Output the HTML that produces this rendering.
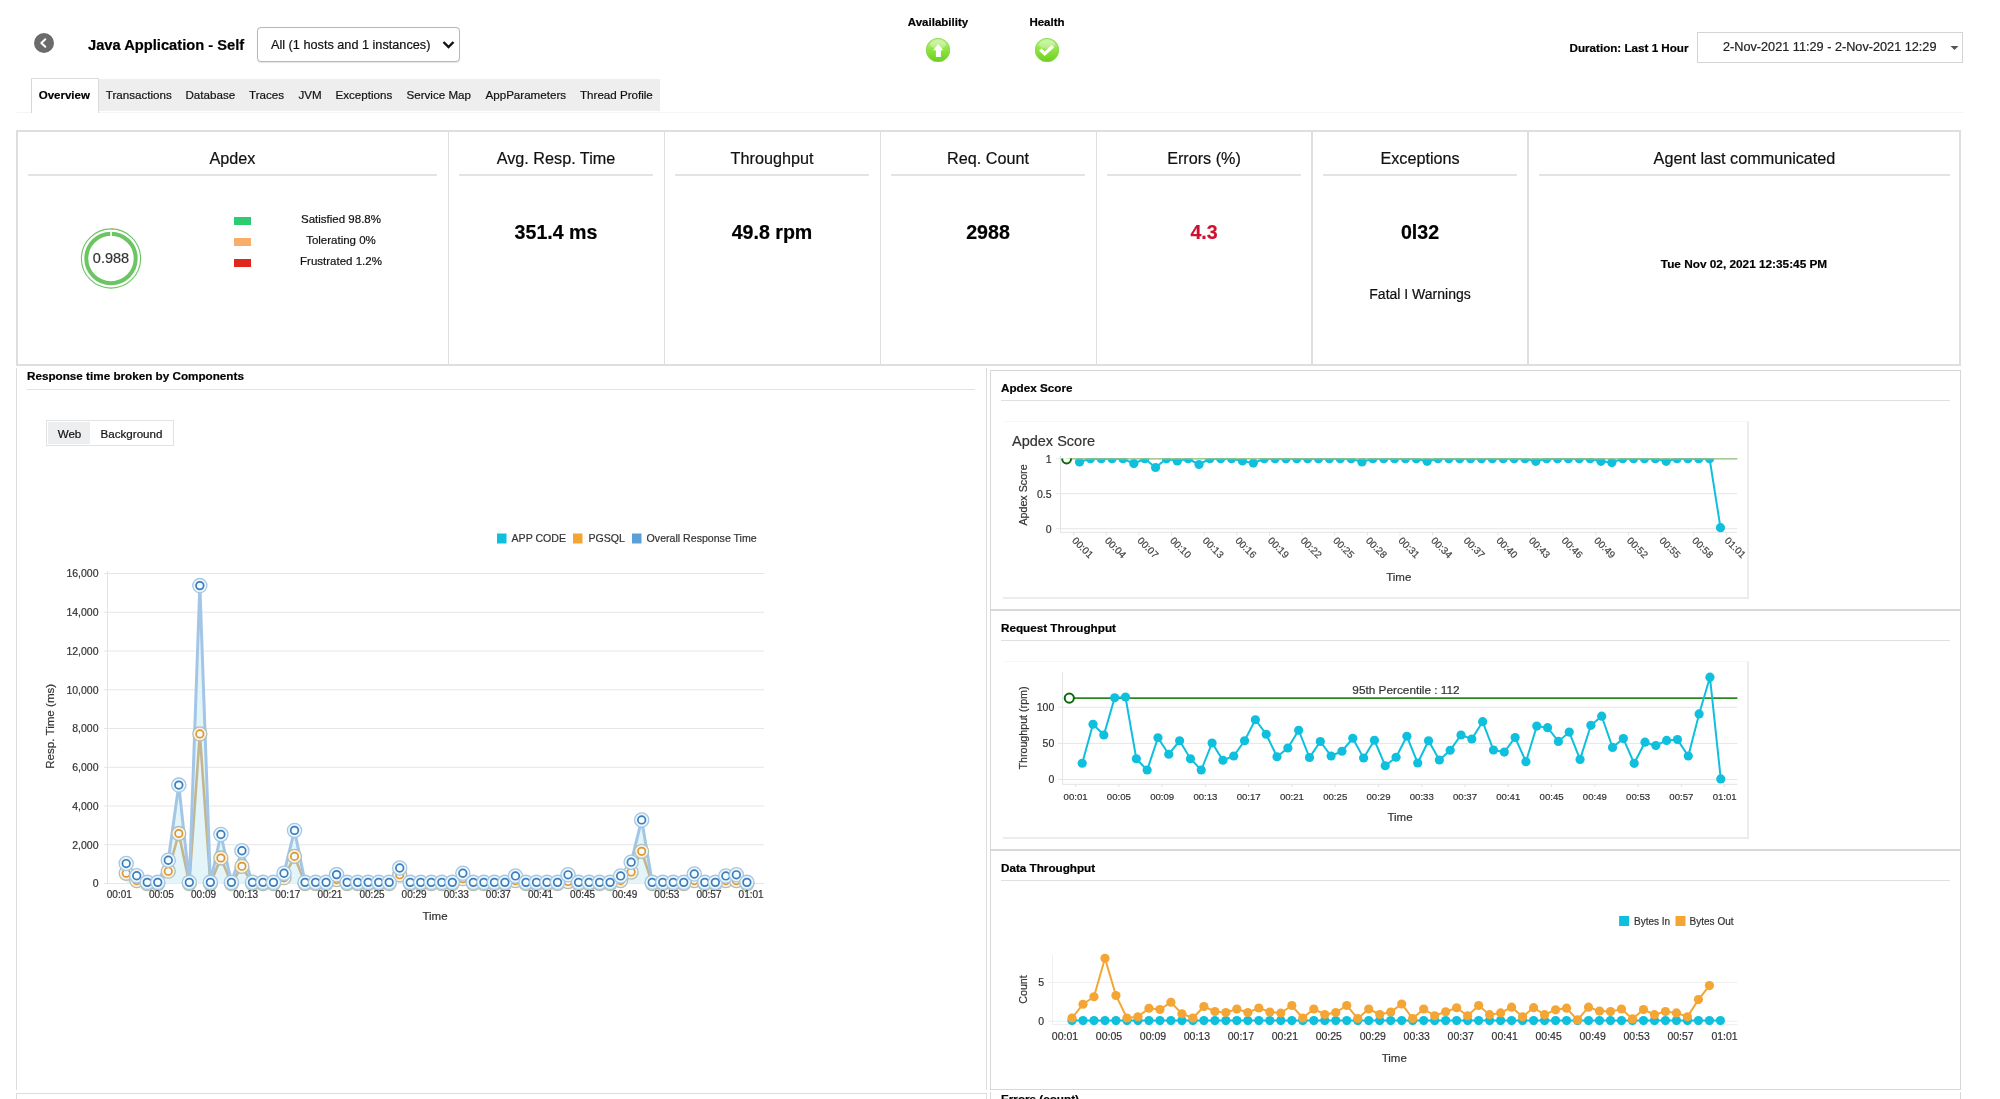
<!DOCTYPE html>
<html><head><meta charset="utf-8"><title>Java Application - Self</title>
<style>
html,body{margin:0;padding:0;background:#fff;}
body{width:2000px;height:1099px;overflow:hidden;position:relative;font-family:"Liberation Sans", sans-serif;}
#root{position:absolute;left:0;top:0;width:2000px;height:1099px;will-change:transform;background:#fff}
.t{position:absolute;white-space:nowrap;font-family:"Liberation Sans", sans-serif;-webkit-text-stroke:0.2px currentColor;}
svg text{font-family:"Liberation Sans", sans-serif;stroke-width:0.2px;}
</style></head><body><div id="root">
<div style="position:absolute;left:34px;top:33px;width:20px;height:20px;border-radius:50%;background:#6b6b6b"></div><svg style="position:absolute;left:34px;top:33px" width="20" height="20"><path d="M11.3 6.2 L7.3 10 L11.3 13.8" stroke="#fff" stroke-width="2" fill="none" stroke-linecap="round" stroke-linejoin="round"/></svg><div class="t" style="left:88px;top:37.56px;font-size:14.7px;line-height:14.7px;font-weight:bold;color:#000;">Java Application - Self</div><div style="position:absolute;left:257px;top:27px;width:203px;height:34.5px;border:1px solid #b8b8b8;border-radius:4px;background:#fff;box-sizing:border-box;box-shadow:0 0.5px 1px rgba(0,0,0,0.1)"></div><div class="t" style="left:271px;top:38.75px;font-size:12.7px;line-height:12.7px;color:#111;">All (1 hosts and 1 instances)</div><svg style="position:absolute;left:441px;top:39px" width="16" height="12"><path d="M2.5 3 L7.5 8 L12.5 3" stroke="#111" stroke-width="2.4" fill="none"/></svg><div class="t" style="left:438px;width:1000px;text-align:center;top:17.47px;font-size:11.5px;line-height:11.5px;font-weight:bold;color:#000;">Availability</div><div class="t" style="left:547px;width:1000px;text-align:center;top:17.47px;font-size:11.5px;line-height:11.5px;font-weight:bold;color:#000;">Health</div><svg style="position:absolute;left:925px;top:37px" width="26" height="26" viewBox="0 0 26 26">
<defs><linearGradient id="g938" x1="0" y1="0" x2="0" y2="1"><stop offset="0%" stop-color="#c9f59c"/><stop offset="45%" stop-color="#92e545"/><stop offset="100%" stop-color="#6bcf1a"/></linearGradient></defs>
<circle cx="13" cy="13" r="12" fill="url(#g938)"/>
<circle cx="13" cy="13" r="11.6" fill="none" stroke="#86d650" stroke-width="0.8"/>
<ellipse cx="13" cy="7.5" rx="8" ry="4.2" fill="#ffffff" opacity="0.3"/>
<path d="M13.3 6.9 L18.3 13.2 L15.9 13.2 L15.9 20 L10.9 20 L10.9 13.2 L8.1 13.2 Z" fill="#fff"/></svg><svg style="position:absolute;left:1034px;top:37px" width="26" height="26" viewBox="0 0 26 26">
<defs><linearGradient id="g1047" x1="0" y1="0" x2="0" y2="1"><stop offset="0%" stop-color="#c9f59c"/><stop offset="45%" stop-color="#92e545"/><stop offset="100%" stop-color="#6bcf1a"/></linearGradient></defs>
<circle cx="13" cy="13" r="12" fill="url(#g1047)"/>
<circle cx="13" cy="13" r="11.6" fill="none" stroke="#86d650" stroke-width="0.8"/>
<ellipse cx="13" cy="7.5" rx="8" ry="4.2" fill="#ffffff" opacity="0.3"/>
<path d="M6.3 12.6 L10.7 16.7 L18.9 9.2" stroke="#fff" stroke-width="3.4" fill="none" stroke-linecap="butt" stroke-linejoin="miter"/></svg><div class="t" style="left:688.5px;width:1000px;text-align:right;top:41.64px;font-size:11.65px;line-height:11.65px;font-weight:bold;color:#000;">Duration: Last 1 Hour</div><div style="position:absolute;left:1697px;top:32px;width:266px;height:31px;border:1px solid #d4d4d4;background:#fff;box-sizing:border-box"></div><div class="t" style="left:1723px;top:41.35px;font-size:12.7px;line-height:12.7px;color:#222;">2-Nov-2021 11:29 - 2-Nov-2021 12:29</div><svg style="position:absolute;left:1949.5px;top:45px" width="10" height="6"><path d="M0.5 1 L4.5 5 L8.5 1 Z" fill="#555"/></svg><div style="position:absolute;left:31px;top:79px;width:629px;height:32px;background:#eeeeee"></div><div style="position:absolute;left:16px;top:112px;width:1948px;height:1px;background:#f5f5f5"></div><div style="position:absolute;left:30.5px;top:78px;width:68px;height:35px;background:#fff;border:1px solid #dcdcdc;border-left:1.5px solid #d8d8d8;border-bottom:none;box-sizing:border-box"></div><div class="t" style="left:38.7px;top:89.97px;font-size:11.5px;line-height:11.5px;font-weight:bold;color:#000;">Overview</div><div class="t" style="left:105.8px;top:88.98px;font-size:11.6px;line-height:11.6px;color:#111;">Transactions</div><div class="t" style="left:185.5px;top:88.98px;font-size:11.6px;line-height:11.6px;color:#111;">Database</div><div class="t" style="left:249px;top:88.98px;font-size:11.6px;line-height:11.6px;color:#111;">Traces</div><div class="t" style="left:298.5px;top:88.98px;font-size:11.6px;line-height:11.6px;color:#111;">JVM</div><div class="t" style="left:335.5px;top:88.98px;font-size:11.6px;line-height:11.6px;color:#111;">Exceptions</div><div class="t" style="left:406.5px;top:88.98px;font-size:11.6px;line-height:11.6px;color:#111;">Service Map</div><div class="t" style="left:485.5px;top:88.98px;font-size:11.6px;line-height:11.6px;color:#111;">AppParameters</div><div class="t" style="left:580px;top:88.98px;font-size:11.6px;line-height:11.6px;color:#111;">Thread Profile</div><div style="position:absolute;left:16px;top:130px;width:1945px;height:236px;border:2px solid #dedede;box-sizing:border-box;background:#fff"></div><div style="position:absolute;left:448px;top:131px;width:1px;height:234px;background:#dedede"></div><div style="position:absolute;left:664px;top:131px;width:1px;height:234px;background:#dedede"></div><div style="position:absolute;left:880px;top:131px;width:1px;height:234px;background:#dedede"></div><div style="position:absolute;left:1096px;top:131px;width:1px;height:234px;background:#dedede"></div><div style="position:absolute;left:1311px;top:131px;width:2px;height:234px;background:#dedede"></div><div style="position:absolute;left:1527px;top:131px;width:2px;height:234px;background:#dedede"></div><div style="position:absolute;left:28px;top:174px;width:409px;height:2px;background:#e3e3e3"></div><div class="t" style="left:-267.5px;width:1000px;text-align:center;top:149.99px;font-size:16.2px;line-height:16.2px;color:#111;">Apdex</div><div style="position:absolute;left:459px;top:174px;width:194px;height:2px;background:#e3e3e3"></div><div class="t" style="left:56.0px;width:1000px;text-align:center;top:149.99px;font-size:16.2px;line-height:16.2px;color:#111;">Avg. Resp. Time</div><div style="position:absolute;left:675px;top:174px;width:194px;height:2px;background:#e3e3e3"></div><div class="t" style="left:272.0px;width:1000px;text-align:center;top:149.99px;font-size:16.2px;line-height:16.2px;color:#111;">Throughput</div><div style="position:absolute;left:891px;top:174px;width:194px;height:2px;background:#e3e3e3"></div><div class="t" style="left:488.0px;width:1000px;text-align:center;top:149.99px;font-size:16.2px;line-height:16.2px;color:#111;">Req. Count</div><div style="position:absolute;left:1107px;top:174px;width:194px;height:2px;background:#e3e3e3"></div><div class="t" style="left:704.0px;width:1000px;text-align:center;top:149.99px;font-size:16.2px;line-height:16.2px;color:#111;">Errors (%)</div><div style="position:absolute;left:1323px;top:174px;width:194px;height:2px;background:#e3e3e3"></div><div class="t" style="left:920.0px;width:1000px;text-align:center;top:149.99px;font-size:16.2px;line-height:16.2px;color:#111;">Exceptions</div><div style="position:absolute;left:1539px;top:174px;width:411px;height:2px;background:#e3e3e3"></div><div class="t" style="left:1244.5px;width:1000px;text-align:center;top:149.99px;font-size:16.2px;line-height:16.2px;color:#111;">Agent last communicated</div><div class="t" style="left:56px;width:1000px;text-align:center;top:223.21px;font-size:19.6px;line-height:19.6px;font-weight:bold;color:#000;">351.4 ms</div><div class="t" style="left:272px;width:1000px;text-align:center;top:223.21px;font-size:19.6px;line-height:19.6px;font-weight:bold;color:#000;">49.8 rpm</div><div class="t" style="left:488px;width:1000px;text-align:center;top:223.21px;font-size:19.6px;line-height:19.6px;font-weight:bold;color:#000;">2988</div><div class="t" style="left:704px;width:1000px;text-align:center;top:223.21px;font-size:19.6px;line-height:19.6px;font-weight:bold;color:#d0102e;">4.3</div><div class="t" style="left:920px;width:1000px;text-align:center;top:223.21px;font-size:19.6px;line-height:19.6px;font-weight:bold;color:#000;">0l32</div><div class="t" style="left:920px;width:1000px;text-align:center;top:287.15px;font-size:14px;line-height:14px;color:#111;">Fatal I Warnings</div><div class="t" style="left:1244px;width:1000px;text-align:center;top:258.51px;font-size:11.8px;line-height:11.8px;font-weight:bold;color:#000;">Tue Nov 02, 2021 12:35:45 PM</div><svg style="position:absolute;left:78px;top:226px" width="66" height="66" viewBox="0 0 66 66">
<circle cx="33" cy="32.5" r="29.6" fill="none" stroke="#6cc563" stroke-width="1.1"/><path d="M33 2.9 A29.6 29.6 0 0 1 35.2 3" stroke="#e8a040" stroke-width="1.2" fill="none"/>
<circle cx="33" cy="32.5" r="24.7" fill="none" stroke="#6cc563" stroke-width="4"/>
<rect x="32.3" y="5" width="1.6" height="6" fill="#fff"/>
</svg><div class="t" style="left:-389px;width:1000px;text-align:center;top:250.93px;font-size:14.5px;line-height:14.5px;color:#333;">0.988</div><div style="position:absolute;left:234px;top:217px;width:17px;height:7.5px;background:#2ecc71"></div><div class="t" style="left:-159px;width:1000px;text-align:center;top:213.57px;font-size:11.5px;line-height:11.5px;color:#111;">Satisfied 98.8%</div><div style="position:absolute;left:234px;top:238px;width:17px;height:7.5px;background:#f7ae6a"></div><div class="t" style="left:-159px;width:1000px;text-align:center;top:234.57px;font-size:11.5px;line-height:11.5px;color:#111;">Tolerating 0%</div><div style="position:absolute;left:234px;top:259px;width:17px;height:7.5px;background:#e1261c"></div><div class="t" style="left:-159px;width:1000px;text-align:center;top:255.57px;font-size:11.5px;line-height:11.5px;color:#111;">Frustrated 1.2%</div><div style="position:absolute;left:16px;top:368px;width:971px;height:722px;border-left:1px solid #dcdcdc;border-right:1px solid #dcdcdc;box-sizing:border-box"></div><div class="t" style="left:27px;top:370.10px;font-size:11.7px;line-height:11.7px;font-weight:bold;color:#000;">Response time broken by Components</div><div style="position:absolute;left:27px;top:389px;width:948px;height:1px;background:#e3e3e3"></div><div style="position:absolute;left:46px;top:420px;width:128px;height:26px;border:1px solid #e2e2e2;box-sizing:border-box"></div><div style="position:absolute;left:48px;top:422px;width:42px;height:22px;background:#eceeef"></div><div class="t" style="left:-430.5px;width:1000px;text-align:center;top:427.78px;font-size:11.6px;line-height:11.6px;color:#111;">Web</div><div class="t" style="left:-368.5px;width:1000px;text-align:center;top:427.78px;font-size:11.6px;line-height:11.6px;color:#111;">Background</div><div style="position:absolute;left:16px;top:1093px;width:971px;height:10px;border:1px solid #dcdcdc;box-sizing:border-box"></div><div style="position:absolute;left:990px;top:370px;width:971px;height:240px;border:1px solid #d8d8d8;box-sizing:border-box;background:#fff"></div><div class="t" style="left:1001px;top:382.10px;font-size:11.7px;line-height:11.7px;font-weight:bold;color:#000;">Apdex Score</div><div style="position:absolute;left:1001px;top:400px;width:949px;height:1px;background:#e0e0e0"></div><div style="position:absolute;left:1003px;top:421px;width:746px;height:178px;border-top:1px solid #f7f7f7;border-right:2px solid #ececec;border-bottom:2px solid #ececec;box-sizing:border-box"></div><div style="position:absolute;left:990px;top:610px;width:971px;height:240px;border:1px solid #d8d8d8;box-sizing:border-box;background:#fff"></div><div class="t" style="left:1001px;top:622.10px;font-size:11.7px;line-height:11.7px;font-weight:bold;color:#000;">Request Throughput</div><div style="position:absolute;left:1001px;top:640px;width:949px;height:1px;background:#e0e0e0"></div><div style="position:absolute;left:1003px;top:661px;width:746px;height:178px;border-top:1px solid #f7f7f7;border-right:2px solid #ececec;border-bottom:2px solid #ececec;box-sizing:border-box"></div><div style="position:absolute;left:990px;top:850px;width:971px;height:240px;border:1px solid #d8d8d8;box-sizing:border-box;background:#fff"></div><div class="t" style="left:1001px;top:862.10px;font-size:11.7px;line-height:11.7px;font-weight:bold;color:#000;">Data Throughput</div><div style="position:absolute;left:1001px;top:880px;width:949px;height:1px;background:#e0e0e0"></div><div style="position:absolute;left:990px;top:1092px;width:971px;height:20px;border:1px solid #d8d8d8;box-sizing:border-box;background:#fff;border-top:none"></div><div class="t" style="left:1001px;top:1093.30px;font-size:11.7px;line-height:11.7px;font-weight:bold;color:#000;">Errors (count)</div><svg style="position:absolute;left:0;top:0" width="1000" height="1099" viewBox="0 0 1000 1099"><line x1="104" y1="883.5" x2="764" y2="883.5" stroke="#e6e6e6" stroke-width="1"/><text x="98.5" y="887.3" font-size="10.5" fill="#333" stroke="#333" stroke-width="0.2" text-anchor="end" >0</text><line x1="104" y1="844.75" x2="764" y2="844.75" stroke="#e6e6e6" stroke-width="1"/><text x="98.5" y="848.55" font-size="10.5" fill="#333" stroke="#333" stroke-width="0.2" text-anchor="end" >2,000</text><line x1="104" y1="806.0" x2="764" y2="806.0" stroke="#e6e6e6" stroke-width="1"/><text x="98.5" y="809.8" font-size="10.5" fill="#333" stroke="#333" stroke-width="0.2" text-anchor="end" >4,000</text><line x1="104" y1="767.25" x2="764" y2="767.25" stroke="#e6e6e6" stroke-width="1"/><text x="98.5" y="771.05" font-size="10.5" fill="#333" stroke="#333" stroke-width="0.2" text-anchor="end" >6,000</text><line x1="104" y1="728.5" x2="764" y2="728.5" stroke="#e6e6e6" stroke-width="1"/><text x="98.5" y="732.3" font-size="10.5" fill="#333" stroke="#333" stroke-width="0.2" text-anchor="end" >8,000</text><line x1="104" y1="689.75" x2="764" y2="689.75" stroke="#e6e6e6" stroke-width="1"/><text x="98.5" y="693.55" font-size="10.5" fill="#333" stroke="#333" stroke-width="0.2" text-anchor="end" >10,000</text><line x1="104" y1="651.0" x2="764" y2="651.0" stroke="#e6e6e6" stroke-width="1"/><text x="98.5" y="654.8" font-size="10.5" fill="#333" stroke="#333" stroke-width="0.2" text-anchor="end" >12,000</text><line x1="104" y1="612.25" x2="764" y2="612.25" stroke="#e6e6e6" stroke-width="1"/><text x="98.5" y="616.05" font-size="10.5" fill="#333" stroke="#333" stroke-width="0.2" text-anchor="end" >14,000</text><line x1="104" y1="573.5" x2="764" y2="573.5" stroke="#e6e6e6" stroke-width="1"/><text x="98.5" y="577.3" font-size="10.5" fill="#333" stroke="#333" stroke-width="0.2" text-anchor="end" >16,000</text><line x1="107.5" y1="571" x2="107.5" y2="884" stroke="#e3e3e3" stroke-width="1"/><path d="M126.20,863.54 L136.72,875.75 L147.24,882.34 L157.76,882.34 L168.28,860.25 L178.80,785.08 L189.32,882.34 L199.84,585.61 L210.36,882.34 L220.88,834.48 L231.40,882.34 L241.92,850.76 L252.44,882.34 L262.96,882.34 L273.48,882.34 L284.00,873.23 L294.52,830.41 L305.04,882.34 L315.56,882.34 L326.08,882.34 L336.60,874.59 L347.12,882.34 L357.64,882.34 L368.16,882.34 L378.68,882.34 L389.20,882.34 L399.72,868.00 L410.24,882.34 L420.76,882.34 L431.28,882.34 L441.80,882.34 L452.32,882.34 L462.84,873.23 L473.36,882.34 L483.88,882.34 L494.40,882.34 L504.92,882.34 L515.44,875.94 L525.96,882.34 L536.48,882.34 L547.00,882.34 L557.52,882.34 L568.04,874.78 L578.56,882.34 L589.08,882.34 L599.60,882.34 L610.12,882.34 L620.64,875.94 L631.16,862.19 L641.68,819.95 L652.20,882.34 L662.72,882.34 L673.24,882.34 L683.76,882.34 L694.28,874.01 L704.80,882.34 L715.32,882.34 L725.84,875.94 L736.36,874.78 L746.88,882.34 L746.88,883.5 L126.20,883.5 Z" fill="#e4f5fa"/><path d="M126.20,873.23 L136.72,880.59 L147.24,883.50 L157.76,883.50 L168.28,871.20 L178.80,833.51 L189.32,883.50 L199.84,733.92 L210.36,883.50 L220.88,858.00 L231.40,883.50 L241.92,866.29 L252.44,883.50 L262.96,883.50 L273.48,883.50 L284.00,877.69 L294.52,856.38 L305.04,883.50 L315.56,883.50 L326.08,883.50 L336.60,879.62 L347.12,883.50 L357.64,883.50 L368.16,883.50 L378.68,883.50 L389.20,883.50 L399.72,874.78 L410.24,883.50 L420.76,883.50 L431.28,883.50 L441.80,883.50 L452.32,883.50 L462.84,878.66 L473.36,883.50 L483.88,883.50 L494.40,883.50 L504.92,883.50 L515.44,880.59 L525.96,883.50 L536.48,883.50 L547.00,883.50 L557.52,883.50 L568.04,881.56 L578.56,883.50 L589.08,883.50 L599.60,883.50 L610.12,883.50 L620.64,880.59 L631.16,872.07 L641.68,851.34 L652.20,883.50 L662.72,883.50 L673.24,883.50 L683.76,883.50 L694.28,880.59 L704.80,883.50 L715.32,883.50 L725.84,880.59 L736.36,880.59 L746.88,883.50" fill="none" stroke="#c3b58e" stroke-width="2.6" stroke-linejoin="round"/><path d="M126.20,863.54 L136.72,875.75 L147.24,882.34 L157.76,882.34 L168.28,860.25 L178.80,785.08 L189.32,882.34 L199.84,585.61 L210.36,882.34 L220.88,834.48 L231.40,882.34 L241.92,850.76 L252.44,882.34 L262.96,882.34 L273.48,882.34 L284.00,873.23 L294.52,830.41 L305.04,882.34 L315.56,882.34 L326.08,882.34 L336.60,874.59 L347.12,882.34 L357.64,882.34 L368.16,882.34 L378.68,882.34 L389.20,882.34 L399.72,868.00 L410.24,882.34 L420.76,882.34 L431.28,882.34 L441.80,882.34 L452.32,882.34 L462.84,873.23 L473.36,882.34 L483.88,882.34 L494.40,882.34 L504.92,882.34 L515.44,875.94 L525.96,882.34 L536.48,882.34 L547.00,882.34 L557.52,882.34 L568.04,874.78 L578.56,882.34 L589.08,882.34 L599.60,882.34 L610.12,882.34 L620.64,875.94 L631.16,862.19 L641.68,819.95 L652.20,882.34 L662.72,882.34 L673.24,882.34 L683.76,882.34 L694.28,874.01 L704.80,882.34 L715.32,882.34 L725.84,875.94 L736.36,874.78 L746.88,882.34" fill="none" stroke="#a3c6e6" stroke-width="3" stroke-linejoin="round"/><circle cx="126.20" cy="873.23" r="7" fill="#f4f4ea" stroke="#b3bdb2" stroke-width="1.3"/><circle cx="126.20" cy="873.23" r="3.7" fill="#f2fbfd" stroke="#e3952e" stroke-width="1.7"/><circle cx="136.72" cy="880.59" r="7" fill="#f4f4ea" stroke="#b3bdb2" stroke-width="1.3"/><circle cx="136.72" cy="880.59" r="3.7" fill="#f2fbfd" stroke="#e3952e" stroke-width="1.7"/><circle cx="147.24" cy="883.50" r="7" fill="#f4f4ea" stroke="#b3bdb2" stroke-width="1.3"/><circle cx="147.24" cy="883.50" r="3.7" fill="#f2fbfd" stroke="#e3952e" stroke-width="1.7"/><circle cx="157.76" cy="883.50" r="7" fill="#f4f4ea" stroke="#b3bdb2" stroke-width="1.3"/><circle cx="157.76" cy="883.50" r="3.7" fill="#f2fbfd" stroke="#e3952e" stroke-width="1.7"/><circle cx="168.28" cy="871.20" r="7" fill="#f4f4ea" stroke="#b3bdb2" stroke-width="1.3"/><circle cx="168.28" cy="871.20" r="3.7" fill="#f2fbfd" stroke="#e3952e" stroke-width="1.7"/><circle cx="178.80" cy="833.51" r="7" fill="#f4f4ea" stroke="#b3bdb2" stroke-width="1.3"/><circle cx="178.80" cy="833.51" r="3.7" fill="#f2fbfd" stroke="#e3952e" stroke-width="1.7"/><circle cx="189.32" cy="883.50" r="7" fill="#f4f4ea" stroke="#b3bdb2" stroke-width="1.3"/><circle cx="189.32" cy="883.50" r="3.7" fill="#f2fbfd" stroke="#e3952e" stroke-width="1.7"/><circle cx="199.84" cy="733.92" r="7" fill="#f4f4ea" stroke="#b3bdb2" stroke-width="1.3"/><circle cx="199.84" cy="733.92" r="3.7" fill="#f2fbfd" stroke="#e3952e" stroke-width="1.7"/><circle cx="210.36" cy="883.50" r="7" fill="#f4f4ea" stroke="#b3bdb2" stroke-width="1.3"/><circle cx="210.36" cy="883.50" r="3.7" fill="#f2fbfd" stroke="#e3952e" stroke-width="1.7"/><circle cx="220.88" cy="858.00" r="7" fill="#f4f4ea" stroke="#b3bdb2" stroke-width="1.3"/><circle cx="220.88" cy="858.00" r="3.7" fill="#f2fbfd" stroke="#e3952e" stroke-width="1.7"/><circle cx="231.40" cy="883.50" r="7" fill="#f4f4ea" stroke="#b3bdb2" stroke-width="1.3"/><circle cx="231.40" cy="883.50" r="3.7" fill="#f2fbfd" stroke="#e3952e" stroke-width="1.7"/><circle cx="241.92" cy="866.29" r="7" fill="#f4f4ea" stroke="#b3bdb2" stroke-width="1.3"/><circle cx="241.92" cy="866.29" r="3.7" fill="#f2fbfd" stroke="#e3952e" stroke-width="1.7"/><circle cx="252.44" cy="883.50" r="7" fill="#f4f4ea" stroke="#b3bdb2" stroke-width="1.3"/><circle cx="252.44" cy="883.50" r="3.7" fill="#f2fbfd" stroke="#e3952e" stroke-width="1.7"/><circle cx="262.96" cy="883.50" r="7" fill="#f4f4ea" stroke="#b3bdb2" stroke-width="1.3"/><circle cx="262.96" cy="883.50" r="3.7" fill="#f2fbfd" stroke="#e3952e" stroke-width="1.7"/><circle cx="273.48" cy="883.50" r="7" fill="#f4f4ea" stroke="#b3bdb2" stroke-width="1.3"/><circle cx="273.48" cy="883.50" r="3.7" fill="#f2fbfd" stroke="#e3952e" stroke-width="1.7"/><circle cx="284.00" cy="877.69" r="7" fill="#f4f4ea" stroke="#b3bdb2" stroke-width="1.3"/><circle cx="284.00" cy="877.69" r="3.7" fill="#f2fbfd" stroke="#e3952e" stroke-width="1.7"/><circle cx="294.52" cy="856.38" r="7" fill="#f4f4ea" stroke="#b3bdb2" stroke-width="1.3"/><circle cx="294.52" cy="856.38" r="3.7" fill="#f2fbfd" stroke="#e3952e" stroke-width="1.7"/><circle cx="305.04" cy="883.50" r="7" fill="#f4f4ea" stroke="#b3bdb2" stroke-width="1.3"/><circle cx="305.04" cy="883.50" r="3.7" fill="#f2fbfd" stroke="#e3952e" stroke-width="1.7"/><circle cx="315.56" cy="883.50" r="7" fill="#f4f4ea" stroke="#b3bdb2" stroke-width="1.3"/><circle cx="315.56" cy="883.50" r="3.7" fill="#f2fbfd" stroke="#e3952e" stroke-width="1.7"/><circle cx="326.08" cy="883.50" r="7" fill="#f4f4ea" stroke="#b3bdb2" stroke-width="1.3"/><circle cx="326.08" cy="883.50" r="3.7" fill="#f2fbfd" stroke="#e3952e" stroke-width="1.7"/><circle cx="336.60" cy="879.62" r="7" fill="#f4f4ea" stroke="#b3bdb2" stroke-width="1.3"/><circle cx="336.60" cy="879.62" r="3.7" fill="#f2fbfd" stroke="#e3952e" stroke-width="1.7"/><circle cx="347.12" cy="883.50" r="7" fill="#f4f4ea" stroke="#b3bdb2" stroke-width="1.3"/><circle cx="347.12" cy="883.50" r="3.7" fill="#f2fbfd" stroke="#e3952e" stroke-width="1.7"/><circle cx="357.64" cy="883.50" r="7" fill="#f4f4ea" stroke="#b3bdb2" stroke-width="1.3"/><circle cx="357.64" cy="883.50" r="3.7" fill="#f2fbfd" stroke="#e3952e" stroke-width="1.7"/><circle cx="368.16" cy="883.50" r="7" fill="#f4f4ea" stroke="#b3bdb2" stroke-width="1.3"/><circle cx="368.16" cy="883.50" r="3.7" fill="#f2fbfd" stroke="#e3952e" stroke-width="1.7"/><circle cx="378.68" cy="883.50" r="7" fill="#f4f4ea" stroke="#b3bdb2" stroke-width="1.3"/><circle cx="378.68" cy="883.50" r="3.7" fill="#f2fbfd" stroke="#e3952e" stroke-width="1.7"/><circle cx="389.20" cy="883.50" r="7" fill="#f4f4ea" stroke="#b3bdb2" stroke-width="1.3"/><circle cx="389.20" cy="883.50" r="3.7" fill="#f2fbfd" stroke="#e3952e" stroke-width="1.7"/><circle cx="399.72" cy="874.78" r="7" fill="#f4f4ea" stroke="#b3bdb2" stroke-width="1.3"/><circle cx="399.72" cy="874.78" r="3.7" fill="#f2fbfd" stroke="#e3952e" stroke-width="1.7"/><circle cx="410.24" cy="883.50" r="7" fill="#f4f4ea" stroke="#b3bdb2" stroke-width="1.3"/><circle cx="410.24" cy="883.50" r="3.7" fill="#f2fbfd" stroke="#e3952e" stroke-width="1.7"/><circle cx="420.76" cy="883.50" r="7" fill="#f4f4ea" stroke="#b3bdb2" stroke-width="1.3"/><circle cx="420.76" cy="883.50" r="3.7" fill="#f2fbfd" stroke="#e3952e" stroke-width="1.7"/><circle cx="431.28" cy="883.50" r="7" fill="#f4f4ea" stroke="#b3bdb2" stroke-width="1.3"/><circle cx="431.28" cy="883.50" r="3.7" fill="#f2fbfd" stroke="#e3952e" stroke-width="1.7"/><circle cx="441.80" cy="883.50" r="7" fill="#f4f4ea" stroke="#b3bdb2" stroke-width="1.3"/><circle cx="441.80" cy="883.50" r="3.7" fill="#f2fbfd" stroke="#e3952e" stroke-width="1.7"/><circle cx="452.32" cy="883.50" r="7" fill="#f4f4ea" stroke="#b3bdb2" stroke-width="1.3"/><circle cx="452.32" cy="883.50" r="3.7" fill="#f2fbfd" stroke="#e3952e" stroke-width="1.7"/><circle cx="462.84" cy="878.66" r="7" fill="#f4f4ea" stroke="#b3bdb2" stroke-width="1.3"/><circle cx="462.84" cy="878.66" r="3.7" fill="#f2fbfd" stroke="#e3952e" stroke-width="1.7"/><circle cx="473.36" cy="883.50" r="7" fill="#f4f4ea" stroke="#b3bdb2" stroke-width="1.3"/><circle cx="473.36" cy="883.50" r="3.7" fill="#f2fbfd" stroke="#e3952e" stroke-width="1.7"/><circle cx="483.88" cy="883.50" r="7" fill="#f4f4ea" stroke="#b3bdb2" stroke-width="1.3"/><circle cx="483.88" cy="883.50" r="3.7" fill="#f2fbfd" stroke="#e3952e" stroke-width="1.7"/><circle cx="494.40" cy="883.50" r="7" fill="#f4f4ea" stroke="#b3bdb2" stroke-width="1.3"/><circle cx="494.40" cy="883.50" r="3.7" fill="#f2fbfd" stroke="#e3952e" stroke-width="1.7"/><circle cx="504.92" cy="883.50" r="7" fill="#f4f4ea" stroke="#b3bdb2" stroke-width="1.3"/><circle cx="504.92" cy="883.50" r="3.7" fill="#f2fbfd" stroke="#e3952e" stroke-width="1.7"/><circle cx="515.44" cy="880.59" r="7" fill="#f4f4ea" stroke="#b3bdb2" stroke-width="1.3"/><circle cx="515.44" cy="880.59" r="3.7" fill="#f2fbfd" stroke="#e3952e" stroke-width="1.7"/><circle cx="525.96" cy="883.50" r="7" fill="#f4f4ea" stroke="#b3bdb2" stroke-width="1.3"/><circle cx="525.96" cy="883.50" r="3.7" fill="#f2fbfd" stroke="#e3952e" stroke-width="1.7"/><circle cx="536.48" cy="883.50" r="7" fill="#f4f4ea" stroke="#b3bdb2" stroke-width="1.3"/><circle cx="536.48" cy="883.50" r="3.7" fill="#f2fbfd" stroke="#e3952e" stroke-width="1.7"/><circle cx="547.00" cy="883.50" r="7" fill="#f4f4ea" stroke="#b3bdb2" stroke-width="1.3"/><circle cx="547.00" cy="883.50" r="3.7" fill="#f2fbfd" stroke="#e3952e" stroke-width="1.7"/><circle cx="557.52" cy="883.50" r="7" fill="#f4f4ea" stroke="#b3bdb2" stroke-width="1.3"/><circle cx="557.52" cy="883.50" r="3.7" fill="#f2fbfd" stroke="#e3952e" stroke-width="1.7"/><circle cx="568.04" cy="881.56" r="7" fill="#f4f4ea" stroke="#b3bdb2" stroke-width="1.3"/><circle cx="568.04" cy="881.56" r="3.7" fill="#f2fbfd" stroke="#e3952e" stroke-width="1.7"/><circle cx="578.56" cy="883.50" r="7" fill="#f4f4ea" stroke="#b3bdb2" stroke-width="1.3"/><circle cx="578.56" cy="883.50" r="3.7" fill="#f2fbfd" stroke="#e3952e" stroke-width="1.7"/><circle cx="589.08" cy="883.50" r="7" fill="#f4f4ea" stroke="#b3bdb2" stroke-width="1.3"/><circle cx="589.08" cy="883.50" r="3.7" fill="#f2fbfd" stroke="#e3952e" stroke-width="1.7"/><circle cx="599.60" cy="883.50" r="7" fill="#f4f4ea" stroke="#b3bdb2" stroke-width="1.3"/><circle cx="599.60" cy="883.50" r="3.7" fill="#f2fbfd" stroke="#e3952e" stroke-width="1.7"/><circle cx="610.12" cy="883.50" r="7" fill="#f4f4ea" stroke="#b3bdb2" stroke-width="1.3"/><circle cx="610.12" cy="883.50" r="3.7" fill="#f2fbfd" stroke="#e3952e" stroke-width="1.7"/><circle cx="620.64" cy="880.59" r="7" fill="#f4f4ea" stroke="#b3bdb2" stroke-width="1.3"/><circle cx="620.64" cy="880.59" r="3.7" fill="#f2fbfd" stroke="#e3952e" stroke-width="1.7"/><circle cx="631.16" cy="872.07" r="7" fill="#f4f4ea" stroke="#b3bdb2" stroke-width="1.3"/><circle cx="631.16" cy="872.07" r="3.7" fill="#f2fbfd" stroke="#e3952e" stroke-width="1.7"/><circle cx="641.68" cy="851.34" r="7" fill="#f4f4ea" stroke="#b3bdb2" stroke-width="1.3"/><circle cx="641.68" cy="851.34" r="3.7" fill="#f2fbfd" stroke="#e3952e" stroke-width="1.7"/><circle cx="652.20" cy="883.50" r="7" fill="#f4f4ea" stroke="#b3bdb2" stroke-width="1.3"/><circle cx="652.20" cy="883.50" r="3.7" fill="#f2fbfd" stroke="#e3952e" stroke-width="1.7"/><circle cx="662.72" cy="883.50" r="7" fill="#f4f4ea" stroke="#b3bdb2" stroke-width="1.3"/><circle cx="662.72" cy="883.50" r="3.7" fill="#f2fbfd" stroke="#e3952e" stroke-width="1.7"/><circle cx="673.24" cy="883.50" r="7" fill="#f4f4ea" stroke="#b3bdb2" stroke-width="1.3"/><circle cx="673.24" cy="883.50" r="3.7" fill="#f2fbfd" stroke="#e3952e" stroke-width="1.7"/><circle cx="683.76" cy="883.50" r="7" fill="#f4f4ea" stroke="#b3bdb2" stroke-width="1.3"/><circle cx="683.76" cy="883.50" r="3.7" fill="#f2fbfd" stroke="#e3952e" stroke-width="1.7"/><circle cx="694.28" cy="880.59" r="7" fill="#f4f4ea" stroke="#b3bdb2" stroke-width="1.3"/><circle cx="694.28" cy="880.59" r="3.7" fill="#f2fbfd" stroke="#e3952e" stroke-width="1.7"/><circle cx="704.80" cy="883.50" r="7" fill="#f4f4ea" stroke="#b3bdb2" stroke-width="1.3"/><circle cx="704.80" cy="883.50" r="3.7" fill="#f2fbfd" stroke="#e3952e" stroke-width="1.7"/><circle cx="715.32" cy="883.50" r="7" fill="#f4f4ea" stroke="#b3bdb2" stroke-width="1.3"/><circle cx="715.32" cy="883.50" r="3.7" fill="#f2fbfd" stroke="#e3952e" stroke-width="1.7"/><circle cx="725.84" cy="880.59" r="7" fill="#f4f4ea" stroke="#b3bdb2" stroke-width="1.3"/><circle cx="725.84" cy="880.59" r="3.7" fill="#f2fbfd" stroke="#e3952e" stroke-width="1.7"/><circle cx="736.36" cy="880.59" r="7" fill="#f4f4ea" stroke="#b3bdb2" stroke-width="1.3"/><circle cx="736.36" cy="880.59" r="3.7" fill="#f2fbfd" stroke="#e3952e" stroke-width="1.7"/><circle cx="746.88" cy="883.50" r="7" fill="#f4f4ea" stroke="#b3bdb2" stroke-width="1.3"/><circle cx="746.88" cy="883.50" r="3.7" fill="#f2fbfd" stroke="#e3952e" stroke-width="1.7"/><circle cx="126.20" cy="863.54" r="7.1" fill="#eaf7fc" stroke="#a9c6e0" stroke-width="1.3"/><circle cx="126.20" cy="863.54" r="3.8" fill="#f6fdff" stroke="#3b7dbd" stroke-width="1.7"/><circle cx="136.72" cy="875.75" r="7.1" fill="#eaf7fc" stroke="#a9c6e0" stroke-width="1.3"/><circle cx="136.72" cy="875.75" r="3.8" fill="#f6fdff" stroke="#3b7dbd" stroke-width="1.7"/><circle cx="147.24" cy="882.34" r="7.1" fill="#eaf7fc" stroke="#a9c6e0" stroke-width="1.3"/><circle cx="147.24" cy="882.34" r="3.8" fill="#f6fdff" stroke="#3b7dbd" stroke-width="1.7"/><circle cx="157.76" cy="882.34" r="7.1" fill="#eaf7fc" stroke="#a9c6e0" stroke-width="1.3"/><circle cx="157.76" cy="882.34" r="3.8" fill="#f6fdff" stroke="#3b7dbd" stroke-width="1.7"/><circle cx="168.28" cy="860.25" r="7.1" fill="#eaf7fc" stroke="#a9c6e0" stroke-width="1.3"/><circle cx="168.28" cy="860.25" r="3.8" fill="#f6fdff" stroke="#3b7dbd" stroke-width="1.7"/><circle cx="178.80" cy="785.08" r="7.1" fill="#eaf7fc" stroke="#a9c6e0" stroke-width="1.3"/><circle cx="178.80" cy="785.08" r="3.8" fill="#f6fdff" stroke="#3b7dbd" stroke-width="1.7"/><circle cx="189.32" cy="882.34" r="7.1" fill="#eaf7fc" stroke="#a9c6e0" stroke-width="1.3"/><circle cx="189.32" cy="882.34" r="3.8" fill="#f6fdff" stroke="#3b7dbd" stroke-width="1.7"/><circle cx="199.84" cy="585.61" r="7.1" fill="#eaf7fc" stroke="#a9c6e0" stroke-width="1.3"/><circle cx="199.84" cy="585.61" r="3.8" fill="#f6fdff" stroke="#3b7dbd" stroke-width="1.7"/><circle cx="210.36" cy="882.34" r="7.1" fill="#eaf7fc" stroke="#a9c6e0" stroke-width="1.3"/><circle cx="210.36" cy="882.34" r="3.8" fill="#f6fdff" stroke="#3b7dbd" stroke-width="1.7"/><circle cx="220.88" cy="834.48" r="7.1" fill="#eaf7fc" stroke="#a9c6e0" stroke-width="1.3"/><circle cx="220.88" cy="834.48" r="3.8" fill="#f6fdff" stroke="#3b7dbd" stroke-width="1.7"/><circle cx="231.40" cy="882.34" r="7.1" fill="#eaf7fc" stroke="#a9c6e0" stroke-width="1.3"/><circle cx="231.40" cy="882.34" r="3.8" fill="#f6fdff" stroke="#3b7dbd" stroke-width="1.7"/><circle cx="241.92" cy="850.76" r="7.1" fill="#eaf7fc" stroke="#a9c6e0" stroke-width="1.3"/><circle cx="241.92" cy="850.76" r="3.8" fill="#f6fdff" stroke="#3b7dbd" stroke-width="1.7"/><circle cx="252.44" cy="882.34" r="7.1" fill="#eaf7fc" stroke="#a9c6e0" stroke-width="1.3"/><circle cx="252.44" cy="882.34" r="3.8" fill="#f6fdff" stroke="#3b7dbd" stroke-width="1.7"/><circle cx="262.96" cy="882.34" r="7.1" fill="#eaf7fc" stroke="#a9c6e0" stroke-width="1.3"/><circle cx="262.96" cy="882.34" r="3.8" fill="#f6fdff" stroke="#3b7dbd" stroke-width="1.7"/><circle cx="273.48" cy="882.34" r="7.1" fill="#eaf7fc" stroke="#a9c6e0" stroke-width="1.3"/><circle cx="273.48" cy="882.34" r="3.8" fill="#f6fdff" stroke="#3b7dbd" stroke-width="1.7"/><circle cx="284.00" cy="873.23" r="7.1" fill="#eaf7fc" stroke="#a9c6e0" stroke-width="1.3"/><circle cx="284.00" cy="873.23" r="3.8" fill="#f6fdff" stroke="#3b7dbd" stroke-width="1.7"/><circle cx="294.52" cy="830.41" r="7.1" fill="#eaf7fc" stroke="#a9c6e0" stroke-width="1.3"/><circle cx="294.52" cy="830.41" r="3.8" fill="#f6fdff" stroke="#3b7dbd" stroke-width="1.7"/><circle cx="305.04" cy="882.34" r="7.1" fill="#eaf7fc" stroke="#a9c6e0" stroke-width="1.3"/><circle cx="305.04" cy="882.34" r="3.8" fill="#f6fdff" stroke="#3b7dbd" stroke-width="1.7"/><circle cx="315.56" cy="882.34" r="7.1" fill="#eaf7fc" stroke="#a9c6e0" stroke-width="1.3"/><circle cx="315.56" cy="882.34" r="3.8" fill="#f6fdff" stroke="#3b7dbd" stroke-width="1.7"/><circle cx="326.08" cy="882.34" r="7.1" fill="#eaf7fc" stroke="#a9c6e0" stroke-width="1.3"/><circle cx="326.08" cy="882.34" r="3.8" fill="#f6fdff" stroke="#3b7dbd" stroke-width="1.7"/><circle cx="336.60" cy="874.59" r="7.1" fill="#eaf7fc" stroke="#a9c6e0" stroke-width="1.3"/><circle cx="336.60" cy="874.59" r="3.8" fill="#f6fdff" stroke="#3b7dbd" stroke-width="1.7"/><circle cx="347.12" cy="882.34" r="7.1" fill="#eaf7fc" stroke="#a9c6e0" stroke-width="1.3"/><circle cx="347.12" cy="882.34" r="3.8" fill="#f6fdff" stroke="#3b7dbd" stroke-width="1.7"/><circle cx="357.64" cy="882.34" r="7.1" fill="#eaf7fc" stroke="#a9c6e0" stroke-width="1.3"/><circle cx="357.64" cy="882.34" r="3.8" fill="#f6fdff" stroke="#3b7dbd" stroke-width="1.7"/><circle cx="368.16" cy="882.34" r="7.1" fill="#eaf7fc" stroke="#a9c6e0" stroke-width="1.3"/><circle cx="368.16" cy="882.34" r="3.8" fill="#f6fdff" stroke="#3b7dbd" stroke-width="1.7"/><circle cx="378.68" cy="882.34" r="7.1" fill="#eaf7fc" stroke="#a9c6e0" stroke-width="1.3"/><circle cx="378.68" cy="882.34" r="3.8" fill="#f6fdff" stroke="#3b7dbd" stroke-width="1.7"/><circle cx="389.20" cy="882.34" r="7.1" fill="#eaf7fc" stroke="#a9c6e0" stroke-width="1.3"/><circle cx="389.20" cy="882.34" r="3.8" fill="#f6fdff" stroke="#3b7dbd" stroke-width="1.7"/><circle cx="399.72" cy="868.00" r="7.1" fill="#eaf7fc" stroke="#a9c6e0" stroke-width="1.3"/><circle cx="399.72" cy="868.00" r="3.8" fill="#f6fdff" stroke="#3b7dbd" stroke-width="1.7"/><circle cx="410.24" cy="882.34" r="7.1" fill="#eaf7fc" stroke="#a9c6e0" stroke-width="1.3"/><circle cx="410.24" cy="882.34" r="3.8" fill="#f6fdff" stroke="#3b7dbd" stroke-width="1.7"/><circle cx="420.76" cy="882.34" r="7.1" fill="#eaf7fc" stroke="#a9c6e0" stroke-width="1.3"/><circle cx="420.76" cy="882.34" r="3.8" fill="#f6fdff" stroke="#3b7dbd" stroke-width="1.7"/><circle cx="431.28" cy="882.34" r="7.1" fill="#eaf7fc" stroke="#a9c6e0" stroke-width="1.3"/><circle cx="431.28" cy="882.34" r="3.8" fill="#f6fdff" stroke="#3b7dbd" stroke-width="1.7"/><circle cx="441.80" cy="882.34" r="7.1" fill="#eaf7fc" stroke="#a9c6e0" stroke-width="1.3"/><circle cx="441.80" cy="882.34" r="3.8" fill="#f6fdff" stroke="#3b7dbd" stroke-width="1.7"/><circle cx="452.32" cy="882.34" r="7.1" fill="#eaf7fc" stroke="#a9c6e0" stroke-width="1.3"/><circle cx="452.32" cy="882.34" r="3.8" fill="#f6fdff" stroke="#3b7dbd" stroke-width="1.7"/><circle cx="462.84" cy="873.23" r="7.1" fill="#eaf7fc" stroke="#a9c6e0" stroke-width="1.3"/><circle cx="462.84" cy="873.23" r="3.8" fill="#f6fdff" stroke="#3b7dbd" stroke-width="1.7"/><circle cx="473.36" cy="882.34" r="7.1" fill="#eaf7fc" stroke="#a9c6e0" stroke-width="1.3"/><circle cx="473.36" cy="882.34" r="3.8" fill="#f6fdff" stroke="#3b7dbd" stroke-width="1.7"/><circle cx="483.88" cy="882.34" r="7.1" fill="#eaf7fc" stroke="#a9c6e0" stroke-width="1.3"/><circle cx="483.88" cy="882.34" r="3.8" fill="#f6fdff" stroke="#3b7dbd" stroke-width="1.7"/><circle cx="494.40" cy="882.34" r="7.1" fill="#eaf7fc" stroke="#a9c6e0" stroke-width="1.3"/><circle cx="494.40" cy="882.34" r="3.8" fill="#f6fdff" stroke="#3b7dbd" stroke-width="1.7"/><circle cx="504.92" cy="882.34" r="7.1" fill="#eaf7fc" stroke="#a9c6e0" stroke-width="1.3"/><circle cx="504.92" cy="882.34" r="3.8" fill="#f6fdff" stroke="#3b7dbd" stroke-width="1.7"/><circle cx="515.44" cy="875.94" r="7.1" fill="#eaf7fc" stroke="#a9c6e0" stroke-width="1.3"/><circle cx="515.44" cy="875.94" r="3.8" fill="#f6fdff" stroke="#3b7dbd" stroke-width="1.7"/><circle cx="525.96" cy="882.34" r="7.1" fill="#eaf7fc" stroke="#a9c6e0" stroke-width="1.3"/><circle cx="525.96" cy="882.34" r="3.8" fill="#f6fdff" stroke="#3b7dbd" stroke-width="1.7"/><circle cx="536.48" cy="882.34" r="7.1" fill="#eaf7fc" stroke="#a9c6e0" stroke-width="1.3"/><circle cx="536.48" cy="882.34" r="3.8" fill="#f6fdff" stroke="#3b7dbd" stroke-width="1.7"/><circle cx="547.00" cy="882.34" r="7.1" fill="#eaf7fc" stroke="#a9c6e0" stroke-width="1.3"/><circle cx="547.00" cy="882.34" r="3.8" fill="#f6fdff" stroke="#3b7dbd" stroke-width="1.7"/><circle cx="557.52" cy="882.34" r="7.1" fill="#eaf7fc" stroke="#a9c6e0" stroke-width="1.3"/><circle cx="557.52" cy="882.34" r="3.8" fill="#f6fdff" stroke="#3b7dbd" stroke-width="1.7"/><circle cx="568.04" cy="874.78" r="7.1" fill="#eaf7fc" stroke="#a9c6e0" stroke-width="1.3"/><circle cx="568.04" cy="874.78" r="3.8" fill="#f6fdff" stroke="#3b7dbd" stroke-width="1.7"/><circle cx="578.56" cy="882.34" r="7.1" fill="#eaf7fc" stroke="#a9c6e0" stroke-width="1.3"/><circle cx="578.56" cy="882.34" r="3.8" fill="#f6fdff" stroke="#3b7dbd" stroke-width="1.7"/><circle cx="589.08" cy="882.34" r="7.1" fill="#eaf7fc" stroke="#a9c6e0" stroke-width="1.3"/><circle cx="589.08" cy="882.34" r="3.8" fill="#f6fdff" stroke="#3b7dbd" stroke-width="1.7"/><circle cx="599.60" cy="882.34" r="7.1" fill="#eaf7fc" stroke="#a9c6e0" stroke-width="1.3"/><circle cx="599.60" cy="882.34" r="3.8" fill="#f6fdff" stroke="#3b7dbd" stroke-width="1.7"/><circle cx="610.12" cy="882.34" r="7.1" fill="#eaf7fc" stroke="#a9c6e0" stroke-width="1.3"/><circle cx="610.12" cy="882.34" r="3.8" fill="#f6fdff" stroke="#3b7dbd" stroke-width="1.7"/><circle cx="620.64" cy="875.94" r="7.1" fill="#eaf7fc" stroke="#a9c6e0" stroke-width="1.3"/><circle cx="620.64" cy="875.94" r="3.8" fill="#f6fdff" stroke="#3b7dbd" stroke-width="1.7"/><circle cx="631.16" cy="862.19" r="7.1" fill="#eaf7fc" stroke="#a9c6e0" stroke-width="1.3"/><circle cx="631.16" cy="862.19" r="3.8" fill="#f6fdff" stroke="#3b7dbd" stroke-width="1.7"/><circle cx="641.68" cy="819.95" r="7.1" fill="#eaf7fc" stroke="#a9c6e0" stroke-width="1.3"/><circle cx="641.68" cy="819.95" r="3.8" fill="#f6fdff" stroke="#3b7dbd" stroke-width="1.7"/><circle cx="652.20" cy="882.34" r="7.1" fill="#eaf7fc" stroke="#a9c6e0" stroke-width="1.3"/><circle cx="652.20" cy="882.34" r="3.8" fill="#f6fdff" stroke="#3b7dbd" stroke-width="1.7"/><circle cx="662.72" cy="882.34" r="7.1" fill="#eaf7fc" stroke="#a9c6e0" stroke-width="1.3"/><circle cx="662.72" cy="882.34" r="3.8" fill="#f6fdff" stroke="#3b7dbd" stroke-width="1.7"/><circle cx="673.24" cy="882.34" r="7.1" fill="#eaf7fc" stroke="#a9c6e0" stroke-width="1.3"/><circle cx="673.24" cy="882.34" r="3.8" fill="#f6fdff" stroke="#3b7dbd" stroke-width="1.7"/><circle cx="683.76" cy="882.34" r="7.1" fill="#eaf7fc" stroke="#a9c6e0" stroke-width="1.3"/><circle cx="683.76" cy="882.34" r="3.8" fill="#f6fdff" stroke="#3b7dbd" stroke-width="1.7"/><circle cx="694.28" cy="874.01" r="7.1" fill="#eaf7fc" stroke="#a9c6e0" stroke-width="1.3"/><circle cx="694.28" cy="874.01" r="3.8" fill="#f6fdff" stroke="#3b7dbd" stroke-width="1.7"/><circle cx="704.80" cy="882.34" r="7.1" fill="#eaf7fc" stroke="#a9c6e0" stroke-width="1.3"/><circle cx="704.80" cy="882.34" r="3.8" fill="#f6fdff" stroke="#3b7dbd" stroke-width="1.7"/><circle cx="715.32" cy="882.34" r="7.1" fill="#eaf7fc" stroke="#a9c6e0" stroke-width="1.3"/><circle cx="715.32" cy="882.34" r="3.8" fill="#f6fdff" stroke="#3b7dbd" stroke-width="1.7"/><circle cx="725.84" cy="875.94" r="7.1" fill="#eaf7fc" stroke="#a9c6e0" stroke-width="1.3"/><circle cx="725.84" cy="875.94" r="3.8" fill="#f6fdff" stroke="#3b7dbd" stroke-width="1.7"/><circle cx="736.36" cy="874.78" r="7.1" fill="#eaf7fc" stroke="#a9c6e0" stroke-width="1.3"/><circle cx="736.36" cy="874.78" r="3.8" fill="#f6fdff" stroke="#3b7dbd" stroke-width="1.7"/><circle cx="746.88" cy="882.34" r="7.1" fill="#eaf7fc" stroke="#a9c6e0" stroke-width="1.3"/><circle cx="746.88" cy="882.34" r="3.8" fill="#f6fdff" stroke="#3b7dbd" stroke-width="1.7"/><text x="119.3" y="897.5" font-size="10" fill="#333" stroke="#333" stroke-width="0.2" text-anchor="middle" >00:01</text><text x="161.42" y="897.5" font-size="10" fill="#333" stroke="#333" stroke-width="0.2" text-anchor="middle" >00:05</text><text x="203.54" y="897.5" font-size="10" fill="#333" stroke="#333" stroke-width="0.2" text-anchor="middle" >00:09</text><text x="245.65999999999997" y="897.5" font-size="10" fill="#333" stroke="#333" stroke-width="0.2" text-anchor="middle" >00:13</text><text x="287.78" y="897.5" font-size="10" fill="#333" stroke="#333" stroke-width="0.2" text-anchor="middle" >00:17</text><text x="329.9" y="897.5" font-size="10" fill="#333" stroke="#333" stroke-width="0.2" text-anchor="middle" >00:21</text><text x="372.02" y="897.5" font-size="10" fill="#333" stroke="#333" stroke-width="0.2" text-anchor="middle" >00:25</text><text x="414.14" y="897.5" font-size="10" fill="#333" stroke="#333" stroke-width="0.2" text-anchor="middle" >00:29</text><text x="456.26" y="897.5" font-size="10" fill="#333" stroke="#333" stroke-width="0.2" text-anchor="middle" >00:33</text><text x="498.38" y="897.5" font-size="10" fill="#333" stroke="#333" stroke-width="0.2" text-anchor="middle" >00:37</text><text x="540.5" y="897.5" font-size="10" fill="#333" stroke="#333" stroke-width="0.2" text-anchor="middle" >00:41</text><text x="582.62" y="897.5" font-size="10" fill="#333" stroke="#333" stroke-width="0.2" text-anchor="middle" >00:45</text><text x="624.7399999999999" y="897.5" font-size="10" fill="#333" stroke="#333" stroke-width="0.2" text-anchor="middle" >00:49</text><text x="666.8599999999999" y="897.5" font-size="10" fill="#333" stroke="#333" stroke-width="0.2" text-anchor="middle" >00:53</text><text x="708.9799999999999" y="897.5" font-size="10" fill="#333" stroke="#333" stroke-width="0.2" text-anchor="middle" >00:57</text><text x="751.0999999999999" y="897.5" font-size="10" fill="#333" stroke="#333" stroke-width="0.2" text-anchor="middle" >01:01</text><text x="435" y="920.2" font-size="11.5" fill="#333" stroke="#333" stroke-width="0.2" text-anchor="middle" >Time</text><text x="0" y="0" font-size="11.6" fill="#333" stroke="#333" stroke-width="0.2" text-anchor="middle" transform="translate(54.2,726.3) rotate(-90)">Resp. Time (ms)</text><rect x="497" y="533.5" width="9.5" height="10" fill="#0fc0de"/><text x="511.5" y="541.9" font-size="10.6" fill="#333" stroke="#333" stroke-width="0.2" text-anchor="start" >APP CODE</text><rect x="573" y="533.5" width="9.5" height="10" fill="#f4a534"/><text x="588.5" y="541.9" font-size="10.6" fill="#333" stroke="#333" stroke-width="0.2" text-anchor="start" >PGSQL</text><rect x="632" y="533.5" width="9.5" height="10" fill="#5a9fd6"/><text x="646.6" y="541.9" font-size="10.6" fill="#333" stroke="#333" stroke-width="0.2" text-anchor="start" >Overall Response Time</text></svg><svg style="position:absolute;left:990px;top:370px" width="970" height="240" viewBox="990 370 970 240"><text x="1012" y="446.2" font-size="14.5" fill="#333" stroke="#333" stroke-width="0.2" text-anchor="start" >Apdex Score</text><line x1="1056" y1="458.75" x2="1737" y2="458.75" stroke="#e6e6e6" stroke-width="1"/><text x="1051.5" y="462.55" font-size="10.5" fill="#333" stroke="#333" stroke-width="0.2" text-anchor="end" >1</text><line x1="1056" y1="493.75" x2="1737" y2="493.75" stroke="#e6e6e6" stroke-width="1"/><text x="1051.5" y="497.55" font-size="10.5" fill="#333" stroke="#333" stroke-width="0.2" text-anchor="end" >0.5</text><line x1="1056" y1="528.75" x2="1737" y2="528.75" stroke="#e6e6e6" stroke-width="1"/><text x="1051.5" y="532.55" font-size="10.5" fill="#333" stroke="#333" stroke-width="0.2" text-anchor="end" >0</text><line x1="1060.5" y1="456" x2="1060.5" y2="532.3" stroke="#e3e3e3" stroke-width="1"/><line x1="1060" y1="532.3" x2="1737" y2="532.3" stroke="#e3e3e3" stroke-width="1"/><line x1="1073.70" y1="532.3" x2="1073.70" y2="535.5" stroke="#e3e3e3" stroke-width="1"/><text x="0" y="0" font-size="10" fill="#444" stroke="#444" stroke-width="0.2" text-anchor="start" transform="translate(1071.50,541.2) rotate(45)">00:01</text><line x1="1106.33" y1="532.3" x2="1106.33" y2="535.5" stroke="#e3e3e3" stroke-width="1"/><text x="0" y="0" font-size="10" fill="#444" stroke="#444" stroke-width="0.2" text-anchor="start" transform="translate(1104.13,541.2) rotate(45)">00:04</text><line x1="1138.96" y1="532.3" x2="1138.96" y2="535.5" stroke="#e3e3e3" stroke-width="1"/><text x="0" y="0" font-size="10" fill="#444" stroke="#444" stroke-width="0.2" text-anchor="start" transform="translate(1136.76,541.2) rotate(45)">00:07</text><line x1="1171.59" y1="532.3" x2="1171.59" y2="535.5" stroke="#e3e3e3" stroke-width="1"/><text x="0" y="0" font-size="10" fill="#444" stroke="#444" stroke-width="0.2" text-anchor="start" transform="translate(1169.39,541.2) rotate(45)">00:10</text><line x1="1204.22" y1="532.3" x2="1204.22" y2="535.5" stroke="#e3e3e3" stroke-width="1"/><text x="0" y="0" font-size="10" fill="#444" stroke="#444" stroke-width="0.2" text-anchor="start" transform="translate(1202.02,541.2) rotate(45)">00:13</text><line x1="1236.85" y1="532.3" x2="1236.85" y2="535.5" stroke="#e3e3e3" stroke-width="1"/><text x="0" y="0" font-size="10" fill="#444" stroke="#444" stroke-width="0.2" text-anchor="start" transform="translate(1234.65,541.2) rotate(45)">00:16</text><line x1="1269.48" y1="532.3" x2="1269.48" y2="535.5" stroke="#e3e3e3" stroke-width="1"/><text x="0" y="0" font-size="10" fill="#444" stroke="#444" stroke-width="0.2" text-anchor="start" transform="translate(1267.28,541.2) rotate(45)">00:19</text><line x1="1302.11" y1="532.3" x2="1302.11" y2="535.5" stroke="#e3e3e3" stroke-width="1"/><text x="0" y="0" font-size="10" fill="#444" stroke="#444" stroke-width="0.2" text-anchor="start" transform="translate(1299.91,541.2) rotate(45)">00:22</text><line x1="1334.74" y1="532.3" x2="1334.74" y2="535.5" stroke="#e3e3e3" stroke-width="1"/><text x="0" y="0" font-size="10" fill="#444" stroke="#444" stroke-width="0.2" text-anchor="start" transform="translate(1332.54,541.2) rotate(45)">00:25</text><line x1="1367.37" y1="532.3" x2="1367.37" y2="535.5" stroke="#e3e3e3" stroke-width="1"/><text x="0" y="0" font-size="10" fill="#444" stroke="#444" stroke-width="0.2" text-anchor="start" transform="translate(1365.17,541.2) rotate(45)">00:28</text><line x1="1400.00" y1="532.3" x2="1400.00" y2="535.5" stroke="#e3e3e3" stroke-width="1"/><text x="0" y="0" font-size="10" fill="#444" stroke="#444" stroke-width="0.2" text-anchor="start" transform="translate(1397.80,541.2) rotate(45)">00:31</text><line x1="1432.63" y1="532.3" x2="1432.63" y2="535.5" stroke="#e3e3e3" stroke-width="1"/><text x="0" y="0" font-size="10" fill="#444" stroke="#444" stroke-width="0.2" text-anchor="start" transform="translate(1430.43,541.2) rotate(45)">00:34</text><line x1="1465.26" y1="532.3" x2="1465.26" y2="535.5" stroke="#e3e3e3" stroke-width="1"/><text x="0" y="0" font-size="10" fill="#444" stroke="#444" stroke-width="0.2" text-anchor="start" transform="translate(1463.06,541.2) rotate(45)">00:37</text><line x1="1497.89" y1="532.3" x2="1497.89" y2="535.5" stroke="#e3e3e3" stroke-width="1"/><text x="0" y="0" font-size="10" fill="#444" stroke="#444" stroke-width="0.2" text-anchor="start" transform="translate(1495.69,541.2) rotate(45)">00:40</text><line x1="1530.52" y1="532.3" x2="1530.52" y2="535.5" stroke="#e3e3e3" stroke-width="1"/><text x="0" y="0" font-size="10" fill="#444" stroke="#444" stroke-width="0.2" text-anchor="start" transform="translate(1528.32,541.2) rotate(45)">00:43</text><line x1="1563.15" y1="532.3" x2="1563.15" y2="535.5" stroke="#e3e3e3" stroke-width="1"/><text x="0" y="0" font-size="10" fill="#444" stroke="#444" stroke-width="0.2" text-anchor="start" transform="translate(1560.95,541.2) rotate(45)">00:46</text><line x1="1595.78" y1="532.3" x2="1595.78" y2="535.5" stroke="#e3e3e3" stroke-width="1"/><text x="0" y="0" font-size="10" fill="#444" stroke="#444" stroke-width="0.2" text-anchor="start" transform="translate(1593.58,541.2) rotate(45)">00:49</text><line x1="1628.41" y1="532.3" x2="1628.41" y2="535.5" stroke="#e3e3e3" stroke-width="1"/><text x="0" y="0" font-size="10" fill="#444" stroke="#444" stroke-width="0.2" text-anchor="start" transform="translate(1626.21,541.2) rotate(45)">00:52</text><line x1="1661.04" y1="532.3" x2="1661.04" y2="535.5" stroke="#e3e3e3" stroke-width="1"/><text x="0" y="0" font-size="10" fill="#444" stroke="#444" stroke-width="0.2" text-anchor="start" transform="translate(1658.84,541.2) rotate(45)">00:55</text><line x1="1693.67" y1="532.3" x2="1693.67" y2="535.5" stroke="#e3e3e3" stroke-width="1"/><text x="0" y="0" font-size="10" fill="#444" stroke="#444" stroke-width="0.2" text-anchor="start" transform="translate(1691.47,541.2) rotate(45)">00:58</text><line x1="1726.30" y1="532.3" x2="1726.30" y2="535.5" stroke="#e3e3e3" stroke-width="1"/><text x="0" y="0" font-size="10" fill="#444" stroke="#444" stroke-width="0.2" text-anchor="start" transform="translate(1724.10,541.2) rotate(45)">01:01</text><text x="1398.8" y="581" font-size="11.5" fill="#333" stroke="#333" stroke-width="0.2" text-anchor="middle" >Time</text><text x="0" y="0" font-size="10.7" fill="#333" stroke="#333" stroke-width="0.2" text-anchor="middle" transform="translate(1026.5,495) rotate(-90)">Apdex Score</text><defs><clipPath id="apc"><rect x="1060" y="458.4" width="690" height="80"/></clipPath></defs><g clip-path="url(#apc)"><path d="M1079.50,462.00 L1090.36,458.75 L1101.23,458.75 L1112.09,458.75 L1122.96,458.75 L1133.82,463.60 L1144.68,458.75 L1155.55,467.50 L1166.41,458.75 L1177.28,461.00 L1188.14,458.75 L1199.00,464.50 L1209.87,458.75 L1220.73,458.75 L1231.60,458.75 L1242.46,461.00 L1253.32,463.10 L1264.19,458.75 L1275.05,458.75 L1285.92,458.75 L1296.78,458.75 L1307.64,458.75 L1318.51,458.75 L1329.37,458.75 L1340.24,458.75 L1351.10,458.75 L1361.96,461.90 L1372.83,458.75 L1383.69,458.75 L1394.56,458.75 L1405.42,458.75 L1416.28,458.75 L1427.15,461.30 L1438.01,458.75 L1448.88,458.75 L1459.74,458.75 L1470.60,458.75 L1481.47,458.75 L1492.33,458.75 L1503.20,458.75 L1514.06,458.75 L1524.92,458.75 L1535.79,461.30 L1546.65,458.75 L1557.52,458.75 L1568.38,458.75 L1579.24,458.75 L1590.11,458.75 L1600.97,461.30 L1611.84,462.60 L1622.70,458.75 L1633.56,458.75 L1644.43,458.75 L1655.29,458.75 L1666.16,461.30 L1677.02,458.75 L1687.88,458.75 L1698.75,458.75 L1709.61,458.75 L1720.48,527.70" fill="none" stroke="#0fc0de" stroke-width="2"/><circle cx="1079.50" cy="462.00" r="4.6" fill="#0fc0de"/><circle cx="1090.36" cy="458.75" r="4.6" fill="#0fc0de"/><circle cx="1101.23" cy="458.75" r="4.6" fill="#0fc0de"/><circle cx="1112.09" cy="458.75" r="4.6" fill="#0fc0de"/><circle cx="1122.96" cy="458.75" r="4.6" fill="#0fc0de"/><circle cx="1133.82" cy="463.60" r="4.6" fill="#0fc0de"/><circle cx="1144.68" cy="458.75" r="4.6" fill="#0fc0de"/><circle cx="1155.55" cy="467.50" r="4.6" fill="#0fc0de"/><circle cx="1166.41" cy="458.75" r="4.6" fill="#0fc0de"/><circle cx="1177.28" cy="461.00" r="4.6" fill="#0fc0de"/><circle cx="1188.14" cy="458.75" r="4.6" fill="#0fc0de"/><circle cx="1199.00" cy="464.50" r="4.6" fill="#0fc0de"/><circle cx="1209.87" cy="458.75" r="4.6" fill="#0fc0de"/><circle cx="1220.73" cy="458.75" r="4.6" fill="#0fc0de"/><circle cx="1231.60" cy="458.75" r="4.6" fill="#0fc0de"/><circle cx="1242.46" cy="461.00" r="4.6" fill="#0fc0de"/><circle cx="1253.32" cy="463.10" r="4.6" fill="#0fc0de"/><circle cx="1264.19" cy="458.75" r="4.6" fill="#0fc0de"/><circle cx="1275.05" cy="458.75" r="4.6" fill="#0fc0de"/><circle cx="1285.92" cy="458.75" r="4.6" fill="#0fc0de"/><circle cx="1296.78" cy="458.75" r="4.6" fill="#0fc0de"/><circle cx="1307.64" cy="458.75" r="4.6" fill="#0fc0de"/><circle cx="1318.51" cy="458.75" r="4.6" fill="#0fc0de"/><circle cx="1329.37" cy="458.75" r="4.6" fill="#0fc0de"/><circle cx="1340.24" cy="458.75" r="4.6" fill="#0fc0de"/><circle cx="1351.10" cy="458.75" r="4.6" fill="#0fc0de"/><circle cx="1361.96" cy="461.90" r="4.6" fill="#0fc0de"/><circle cx="1372.83" cy="458.75" r="4.6" fill="#0fc0de"/><circle cx="1383.69" cy="458.75" r="4.6" fill="#0fc0de"/><circle cx="1394.56" cy="458.75" r="4.6" fill="#0fc0de"/><circle cx="1405.42" cy="458.75" r="4.6" fill="#0fc0de"/><circle cx="1416.28" cy="458.75" r="4.6" fill="#0fc0de"/><circle cx="1427.15" cy="461.30" r="4.6" fill="#0fc0de"/><circle cx="1438.01" cy="458.75" r="4.6" fill="#0fc0de"/><circle cx="1448.88" cy="458.75" r="4.6" fill="#0fc0de"/><circle cx="1459.74" cy="458.75" r="4.6" fill="#0fc0de"/><circle cx="1470.60" cy="458.75" r="4.6" fill="#0fc0de"/><circle cx="1481.47" cy="458.75" r="4.6" fill="#0fc0de"/><circle cx="1492.33" cy="458.75" r="4.6" fill="#0fc0de"/><circle cx="1503.20" cy="458.75" r="4.6" fill="#0fc0de"/><circle cx="1514.06" cy="458.75" r="4.6" fill="#0fc0de"/><circle cx="1524.92" cy="458.75" r="4.6" fill="#0fc0de"/><circle cx="1535.79" cy="461.30" r="4.6" fill="#0fc0de"/><circle cx="1546.65" cy="458.75" r="4.6" fill="#0fc0de"/><circle cx="1557.52" cy="458.75" r="4.6" fill="#0fc0de"/><circle cx="1568.38" cy="458.75" r="4.6" fill="#0fc0de"/><circle cx="1579.24" cy="458.75" r="4.6" fill="#0fc0de"/><circle cx="1590.11" cy="458.75" r="4.6" fill="#0fc0de"/><circle cx="1600.97" cy="461.30" r="4.6" fill="#0fc0de"/><circle cx="1611.84" cy="462.60" r="4.6" fill="#0fc0de"/><circle cx="1622.70" cy="458.75" r="4.6" fill="#0fc0de"/><circle cx="1633.56" cy="458.75" r="4.6" fill="#0fc0de"/><circle cx="1644.43" cy="458.75" r="4.6" fill="#0fc0de"/><circle cx="1655.29" cy="458.75" r="4.6" fill="#0fc0de"/><circle cx="1666.16" cy="461.30" r="4.6" fill="#0fc0de"/><circle cx="1677.02" cy="458.75" r="4.6" fill="#0fc0de"/><circle cx="1687.88" cy="458.75" r="4.6" fill="#0fc0de"/><circle cx="1698.75" cy="458.75" r="4.6" fill="#0fc0de"/><circle cx="1709.61" cy="458.75" r="4.6" fill="#0fc0de"/><circle cx="1720.48" cy="527.70" r="4.6" fill="#0fc0de"/></g><line x1="1066.6" y1="458.9" x2="1737.4" y2="458.9" stroke="#8fbf7a" stroke-width="1.4"/><g clip-path="url(#apc)"><circle cx="1066.6" cy="459" r="4.4" fill="#fff" stroke="#0a6a0a" stroke-width="2"/></g></svg><svg style="position:absolute;left:990px;top:610px" width="970" height="240" viewBox="990 610 970 240"><line x1="1058" y1="707.3" x2="1737.4" y2="707.3" stroke="#e6e6e6" stroke-width="1"/><text x="1054.3" y="711.0999999999999" font-size="10.5" fill="#333" stroke="#333" stroke-width="0.2" text-anchor="end" >100</text><line x1="1058" y1="743.4" x2="1737.4" y2="743.4" stroke="#e6e6e6" stroke-width="1"/><text x="1054.3" y="747.1999999999999" font-size="10.5" fill="#333" stroke="#333" stroke-width="0.2" text-anchor="end" >50</text><line x1="1058" y1="779.5" x2="1737.4" y2="779.5" stroke="#e6e6e6" stroke-width="1"/><text x="1054.3" y="783.3" font-size="10.5" fill="#333" stroke="#333" stroke-width="0.2" text-anchor="end" >0</text><line x1="1062.6" y1="671.8" x2="1062.6" y2="784.3" stroke="#e3e3e3" stroke-width="1"/><line x1="1062.6" y1="784.3" x2="1737.4" y2="784.3" stroke="#e3e3e3" stroke-width="1"/><line x1="1075.60" y1="784.3" x2="1075.60" y2="787" stroke="#e3e3e3" stroke-width="1"/><text x="1075.6" y="799.6" font-size="9.6" fill="#333" stroke="#333" stroke-width="0.2" text-anchor="middle" >00:01</text><line x1="1118.87" y1="784.3" x2="1118.87" y2="787" stroke="#e3e3e3" stroke-width="1"/><text x="1118.87" y="799.6" font-size="9.6" fill="#333" stroke="#333" stroke-width="0.2" text-anchor="middle" >00:05</text><line x1="1162.14" y1="784.3" x2="1162.14" y2="787" stroke="#e3e3e3" stroke-width="1"/><text x="1162.1399999999999" y="799.6" font-size="9.6" fill="#333" stroke="#333" stroke-width="0.2" text-anchor="middle" >00:09</text><line x1="1205.41" y1="784.3" x2="1205.41" y2="787" stroke="#e3e3e3" stroke-width="1"/><text x="1205.4099999999999" y="799.6" font-size="9.6" fill="#333" stroke="#333" stroke-width="0.2" text-anchor="middle" >00:13</text><line x1="1248.68" y1="784.3" x2="1248.68" y2="787" stroke="#e3e3e3" stroke-width="1"/><text x="1248.6799999999998" y="799.6" font-size="9.6" fill="#333" stroke="#333" stroke-width="0.2" text-anchor="middle" >00:17</text><line x1="1291.95" y1="784.3" x2="1291.95" y2="787" stroke="#e3e3e3" stroke-width="1"/><text x="1291.9499999999998" y="799.6" font-size="9.6" fill="#333" stroke="#333" stroke-width="0.2" text-anchor="middle" >00:21</text><line x1="1335.22" y1="784.3" x2="1335.22" y2="787" stroke="#e3e3e3" stroke-width="1"/><text x="1335.2199999999998" y="799.6" font-size="9.6" fill="#333" stroke="#333" stroke-width="0.2" text-anchor="middle" >00:25</text><line x1="1378.49" y1="784.3" x2="1378.49" y2="787" stroke="#e3e3e3" stroke-width="1"/><text x="1378.49" y="799.6" font-size="9.6" fill="#333" stroke="#333" stroke-width="0.2" text-anchor="middle" >00:29</text><line x1="1421.76" y1="784.3" x2="1421.76" y2="787" stroke="#e3e3e3" stroke-width="1"/><text x="1421.76" y="799.6" font-size="9.6" fill="#333" stroke="#333" stroke-width="0.2" text-anchor="middle" >00:33</text><line x1="1465.03" y1="784.3" x2="1465.03" y2="787" stroke="#e3e3e3" stroke-width="1"/><text x="1465.03" y="799.6" font-size="9.6" fill="#333" stroke="#333" stroke-width="0.2" text-anchor="middle" >00:37</text><line x1="1508.30" y1="784.3" x2="1508.30" y2="787" stroke="#e3e3e3" stroke-width="1"/><text x="1508.3" y="799.6" font-size="9.6" fill="#333" stroke="#333" stroke-width="0.2" text-anchor="middle" >00:41</text><line x1="1551.57" y1="784.3" x2="1551.57" y2="787" stroke="#e3e3e3" stroke-width="1"/><text x="1551.57" y="799.6" font-size="9.6" fill="#333" stroke="#333" stroke-width="0.2" text-anchor="middle" >00:45</text><line x1="1594.84" y1="784.3" x2="1594.84" y2="787" stroke="#e3e3e3" stroke-width="1"/><text x="1594.84" y="799.6" font-size="9.6" fill="#333" stroke="#333" stroke-width="0.2" text-anchor="middle" >00:49</text><line x1="1638.11" y1="784.3" x2="1638.11" y2="787" stroke="#e3e3e3" stroke-width="1"/><text x="1638.11" y="799.6" font-size="9.6" fill="#333" stroke="#333" stroke-width="0.2" text-anchor="middle" >00:53</text><line x1="1681.38" y1="784.3" x2="1681.38" y2="787" stroke="#e3e3e3" stroke-width="1"/><text x="1681.38" y="799.6" font-size="9.6" fill="#333" stroke="#333" stroke-width="0.2" text-anchor="middle" >00:57</text><line x1="1724.65" y1="784.3" x2="1724.65" y2="787" stroke="#e3e3e3" stroke-width="1"/><text x="1724.65" y="799.6" font-size="9.6" fill="#333" stroke="#333" stroke-width="0.2" text-anchor="middle" >01:01</text><text x="1400" y="821" font-size="11.5" fill="#333" stroke="#333" stroke-width="0.2" text-anchor="middle" >Time</text><text x="0" y="0" font-size="10.7" fill="#333" stroke="#333" stroke-width="0.2" text-anchor="middle" transform="translate(1026.5,728) rotate(-90)">Throughput (rpm)</text><line x1="1069" y1="698.1" x2="1737.4" y2="698.1" stroke="#2a8a1e" stroke-width="1.6"/><text x="1406" y="693.6" font-size="11.8" fill="#333" stroke="#333" stroke-width="0.2" text-anchor="middle" >95th Percentile : 112</text><path d="M1082.20,763.25 L1093.02,724.25 L1103.85,735.00 L1114.67,697.75 L1125.49,697.00 L1136.32,758.75 L1147.14,770.00 L1157.96,737.75 L1168.78,754.25 L1179.61,740.75 L1190.43,758.75 L1201.25,770.00 L1212.08,743.00 L1222.90,760.25 L1233.72,756.00 L1244.55,740.75 L1255.37,719.75 L1266.19,734.25 L1277.01,756.75 L1287.84,748.00 L1298.66,730.25 L1309.48,757.50 L1320.31,741.50 L1331.13,756.00 L1341.95,751.25 L1352.78,738.25 L1363.60,758.00 L1374.42,740.25 L1385.24,765.75 L1396.07,757.25 L1406.89,736.25 L1417.71,763.00 L1428.54,740.75 L1439.36,760.00 L1450.18,750.25 L1461.01,735.00 L1471.83,739.00 L1482.65,721.70 L1493.47,750.00 L1504.30,752.10 L1515.12,737.50 L1525.94,761.70 L1536.77,726.10 L1547.59,727.70 L1558.41,741.40 L1569.24,732.10 L1580.06,759.40 L1590.88,725.30 L1601.70,716.20 L1612.53,747.40 L1623.35,738.60 L1634.17,763.30 L1645.00,742.20 L1655.82,745.60 L1666.64,740.40 L1677.47,739.60 L1688.29,756.00 L1699.11,713.90 L1709.93,677.20 L1720.76,778.90" fill="none" stroke="#0fc0de" stroke-width="2"/><circle cx="1082.20" cy="763.25" r="4.6" fill="#0fc0de"/><circle cx="1093.02" cy="724.25" r="4.6" fill="#0fc0de"/><circle cx="1103.85" cy="735.00" r="4.6" fill="#0fc0de"/><circle cx="1114.67" cy="697.75" r="4.6" fill="#0fc0de"/><circle cx="1125.49" cy="697.00" r="4.6" fill="#0fc0de"/><circle cx="1136.32" cy="758.75" r="4.6" fill="#0fc0de"/><circle cx="1147.14" cy="770.00" r="4.6" fill="#0fc0de"/><circle cx="1157.96" cy="737.75" r="4.6" fill="#0fc0de"/><circle cx="1168.78" cy="754.25" r="4.6" fill="#0fc0de"/><circle cx="1179.61" cy="740.75" r="4.6" fill="#0fc0de"/><circle cx="1190.43" cy="758.75" r="4.6" fill="#0fc0de"/><circle cx="1201.25" cy="770.00" r="4.6" fill="#0fc0de"/><circle cx="1212.08" cy="743.00" r="4.6" fill="#0fc0de"/><circle cx="1222.90" cy="760.25" r="4.6" fill="#0fc0de"/><circle cx="1233.72" cy="756.00" r="4.6" fill="#0fc0de"/><circle cx="1244.55" cy="740.75" r="4.6" fill="#0fc0de"/><circle cx="1255.37" cy="719.75" r="4.6" fill="#0fc0de"/><circle cx="1266.19" cy="734.25" r="4.6" fill="#0fc0de"/><circle cx="1277.01" cy="756.75" r="4.6" fill="#0fc0de"/><circle cx="1287.84" cy="748.00" r="4.6" fill="#0fc0de"/><circle cx="1298.66" cy="730.25" r="4.6" fill="#0fc0de"/><circle cx="1309.48" cy="757.50" r="4.6" fill="#0fc0de"/><circle cx="1320.31" cy="741.50" r="4.6" fill="#0fc0de"/><circle cx="1331.13" cy="756.00" r="4.6" fill="#0fc0de"/><circle cx="1341.95" cy="751.25" r="4.6" fill="#0fc0de"/><circle cx="1352.78" cy="738.25" r="4.6" fill="#0fc0de"/><circle cx="1363.60" cy="758.00" r="4.6" fill="#0fc0de"/><circle cx="1374.42" cy="740.25" r="4.6" fill="#0fc0de"/><circle cx="1385.24" cy="765.75" r="4.6" fill="#0fc0de"/><circle cx="1396.07" cy="757.25" r="4.6" fill="#0fc0de"/><circle cx="1406.89" cy="736.25" r="4.6" fill="#0fc0de"/><circle cx="1417.71" cy="763.00" r="4.6" fill="#0fc0de"/><circle cx="1428.54" cy="740.75" r="4.6" fill="#0fc0de"/><circle cx="1439.36" cy="760.00" r="4.6" fill="#0fc0de"/><circle cx="1450.18" cy="750.25" r="4.6" fill="#0fc0de"/><circle cx="1461.01" cy="735.00" r="4.6" fill="#0fc0de"/><circle cx="1471.83" cy="739.00" r="4.6" fill="#0fc0de"/><circle cx="1482.65" cy="721.70" r="4.6" fill="#0fc0de"/><circle cx="1493.47" cy="750.00" r="4.6" fill="#0fc0de"/><circle cx="1504.30" cy="752.10" r="4.6" fill="#0fc0de"/><circle cx="1515.12" cy="737.50" r="4.6" fill="#0fc0de"/><circle cx="1525.94" cy="761.70" r="4.6" fill="#0fc0de"/><circle cx="1536.77" cy="726.10" r="4.6" fill="#0fc0de"/><circle cx="1547.59" cy="727.70" r="4.6" fill="#0fc0de"/><circle cx="1558.41" cy="741.40" r="4.6" fill="#0fc0de"/><circle cx="1569.24" cy="732.10" r="4.6" fill="#0fc0de"/><circle cx="1580.06" cy="759.40" r="4.6" fill="#0fc0de"/><circle cx="1590.88" cy="725.30" r="4.6" fill="#0fc0de"/><circle cx="1601.70" cy="716.20" r="4.6" fill="#0fc0de"/><circle cx="1612.53" cy="747.40" r="4.6" fill="#0fc0de"/><circle cx="1623.35" cy="738.60" r="4.6" fill="#0fc0de"/><circle cx="1634.17" cy="763.30" r="4.6" fill="#0fc0de"/><circle cx="1645.00" cy="742.20" r="4.6" fill="#0fc0de"/><circle cx="1655.82" cy="745.60" r="4.6" fill="#0fc0de"/><circle cx="1666.64" cy="740.40" r="4.6" fill="#0fc0de"/><circle cx="1677.47" cy="739.60" r="4.6" fill="#0fc0de"/><circle cx="1688.29" cy="756.00" r="4.6" fill="#0fc0de"/><circle cx="1699.11" cy="713.90" r="4.6" fill="#0fc0de"/><circle cx="1709.93" cy="677.20" r="4.6" fill="#0fc0de"/><circle cx="1720.76" cy="778.90" r="4.6" fill="#0fc0de"/><circle cx="1069.3" cy="698.1" r="4.6" fill="#fff" stroke="#0a6a0a" stroke-width="2"/></svg><svg style="position:absolute;left:990px;top:850px" width="970" height="245" viewBox="990 850 970 245"><line x1="1048" y1="982.4" x2="1737.4" y2="982.4" stroke="#eeeeee" stroke-width="1"/><text x="1044" y="986.1999999999999" font-size="10.5" fill="#333" stroke="#333" stroke-width="0.2" text-anchor="end" >5</text><line x1="1048" y1="1021.3" x2="1737.4" y2="1021.3" stroke="#eeeeee" stroke-width="1"/><text x="1044" y="1025.1" font-size="10.5" fill="#333" stroke="#333" stroke-width="0.2" text-anchor="end" >0</text><line x1="1052.5" y1="955" x2="1052.5" y2="1024.5" stroke="#eeeeee" stroke-width="1"/><line x1="1052.5" y1="1024.5" x2="1737.4" y2="1024.5" stroke="#eeeeee" stroke-width="1"/><text x="1065.0" y="1039.9" font-size="10.5" fill="#333" stroke="#333" stroke-width="0.2" text-anchor="middle" >00:01</text><text x="1108.97" y="1039.9" font-size="10.5" fill="#333" stroke="#333" stroke-width="0.2" text-anchor="middle" >00:05</text><text x="1152.94" y="1039.9" font-size="10.5" fill="#333" stroke="#333" stroke-width="0.2" text-anchor="middle" >00:09</text><text x="1196.91" y="1039.9" font-size="10.5" fill="#333" stroke="#333" stroke-width="0.2" text-anchor="middle" >00:13</text><text x="1240.88" y="1039.9" font-size="10.5" fill="#333" stroke="#333" stroke-width="0.2" text-anchor="middle" >00:17</text><text x="1284.85" y="1039.9" font-size="10.5" fill="#333" stroke="#333" stroke-width="0.2" text-anchor="middle" >00:21</text><text x="1328.82" y="1039.9" font-size="10.5" fill="#333" stroke="#333" stroke-width="0.2" text-anchor="middle" >00:25</text><text x="1372.79" y="1039.9" font-size="10.5" fill="#333" stroke="#333" stroke-width="0.2" text-anchor="middle" >00:29</text><text x="1416.76" y="1039.9" font-size="10.5" fill="#333" stroke="#333" stroke-width="0.2" text-anchor="middle" >00:33</text><text x="1460.73" y="1039.9" font-size="10.5" fill="#333" stroke="#333" stroke-width="0.2" text-anchor="middle" >00:37</text><text x="1504.7" y="1039.9" font-size="10.5" fill="#333" stroke="#333" stroke-width="0.2" text-anchor="middle" >00:41</text><text x="1548.67" y="1039.9" font-size="10.5" fill="#333" stroke="#333" stroke-width="0.2" text-anchor="middle" >00:45</text><text x="1592.6399999999999" y="1039.9" font-size="10.5" fill="#333" stroke="#333" stroke-width="0.2" text-anchor="middle" >00:49</text><text x="1636.6100000000001" y="1039.9" font-size="10.5" fill="#333" stroke="#333" stroke-width="0.2" text-anchor="middle" >00:53</text><text x="1680.58" y="1039.9" font-size="10.5" fill="#333" stroke="#333" stroke-width="0.2" text-anchor="middle" >00:57</text><text x="1724.55" y="1039.9" font-size="10.5" fill="#333" stroke="#333" stroke-width="0.2" text-anchor="middle" >01:01</text><text x="1394.3" y="1061.5" font-size="11.5" fill="#333" stroke="#333" stroke-width="0.2" text-anchor="middle" >Time</text><text x="0" y="0" font-size="10.7" fill="#333" stroke="#333" stroke-width="0.2" text-anchor="middle" transform="translate(1026.5,989.5) rotate(-90)">Count</text><path d="M1072.00,1020.6 L1082.99,1020.6 L1093.98,1020.6 L1104.97,1020.6 L1115.96,1020.6 L1126.95,1020.6 L1137.94,1020.6 L1148.93,1020.6 L1159.92,1020.6 L1170.91,1020.6 L1181.90,1020.6 L1192.89,1020.6 L1203.88,1020.6 L1214.87,1020.6 L1225.86,1020.6 L1236.85,1020.6 L1247.84,1020.6 L1258.83,1020.6 L1269.82,1020.6 L1280.81,1020.6 L1291.80,1020.6 L1302.79,1020.6 L1313.78,1020.6 L1324.77,1020.6 L1335.76,1020.6 L1346.75,1020.6 L1357.74,1020.6 L1368.73,1020.6 L1379.72,1020.6 L1390.71,1020.6 L1401.70,1020.6 L1412.69,1020.6 L1423.68,1020.6 L1434.67,1020.6 L1445.66,1020.6 L1456.65,1020.6 L1467.64,1020.6 L1478.63,1020.6 L1489.62,1020.6 L1500.61,1020.6 L1511.60,1020.6 L1522.59,1020.6 L1533.58,1020.6 L1544.57,1020.6 L1555.56,1020.6 L1566.55,1020.6 L1577.54,1020.6 L1588.53,1020.6 L1599.52,1020.6 L1610.51,1020.6 L1621.50,1020.6 L1632.49,1020.6 L1643.48,1020.6 L1654.47,1020.6 L1665.46,1020.6 L1676.45,1020.6 L1687.44,1020.6 L1698.43,1020.6 L1709.42,1020.6 L1720.41,1020.6" fill="none" stroke="#0fc0de" stroke-width="2"/><circle cx="1072.00" cy="1020.6" r="4.6" fill="#0fc0de"/><circle cx="1082.99" cy="1020.6" r="4.6" fill="#0fc0de"/><circle cx="1093.98" cy="1020.6" r="4.6" fill="#0fc0de"/><circle cx="1104.97" cy="1020.6" r="4.6" fill="#0fc0de"/><circle cx="1115.96" cy="1020.6" r="4.6" fill="#0fc0de"/><circle cx="1126.95" cy="1020.6" r="4.6" fill="#0fc0de"/><circle cx="1137.94" cy="1020.6" r="4.6" fill="#0fc0de"/><circle cx="1148.93" cy="1020.6" r="4.6" fill="#0fc0de"/><circle cx="1159.92" cy="1020.6" r="4.6" fill="#0fc0de"/><circle cx="1170.91" cy="1020.6" r="4.6" fill="#0fc0de"/><circle cx="1181.90" cy="1020.6" r="4.6" fill="#0fc0de"/><circle cx="1192.89" cy="1020.6" r="4.6" fill="#0fc0de"/><circle cx="1203.88" cy="1020.6" r="4.6" fill="#0fc0de"/><circle cx="1214.87" cy="1020.6" r="4.6" fill="#0fc0de"/><circle cx="1225.86" cy="1020.6" r="4.6" fill="#0fc0de"/><circle cx="1236.85" cy="1020.6" r="4.6" fill="#0fc0de"/><circle cx="1247.84" cy="1020.6" r="4.6" fill="#0fc0de"/><circle cx="1258.83" cy="1020.6" r="4.6" fill="#0fc0de"/><circle cx="1269.82" cy="1020.6" r="4.6" fill="#0fc0de"/><circle cx="1280.81" cy="1020.6" r="4.6" fill="#0fc0de"/><circle cx="1291.80" cy="1020.6" r="4.6" fill="#0fc0de"/><circle cx="1302.79" cy="1020.6" r="4.6" fill="#0fc0de"/><circle cx="1313.78" cy="1020.6" r="4.6" fill="#0fc0de"/><circle cx="1324.77" cy="1020.6" r="4.6" fill="#0fc0de"/><circle cx="1335.76" cy="1020.6" r="4.6" fill="#0fc0de"/><circle cx="1346.75" cy="1020.6" r="4.6" fill="#0fc0de"/><circle cx="1357.74" cy="1020.6" r="4.6" fill="#0fc0de"/><circle cx="1368.73" cy="1020.6" r="4.6" fill="#0fc0de"/><circle cx="1379.72" cy="1020.6" r="4.6" fill="#0fc0de"/><circle cx="1390.71" cy="1020.6" r="4.6" fill="#0fc0de"/><circle cx="1401.70" cy="1020.6" r="4.6" fill="#0fc0de"/><circle cx="1412.69" cy="1020.6" r="4.6" fill="#0fc0de"/><circle cx="1423.68" cy="1020.6" r="4.6" fill="#0fc0de"/><circle cx="1434.67" cy="1020.6" r="4.6" fill="#0fc0de"/><circle cx="1445.66" cy="1020.6" r="4.6" fill="#0fc0de"/><circle cx="1456.65" cy="1020.6" r="4.6" fill="#0fc0de"/><circle cx="1467.64" cy="1020.6" r="4.6" fill="#0fc0de"/><circle cx="1478.63" cy="1020.6" r="4.6" fill="#0fc0de"/><circle cx="1489.62" cy="1020.6" r="4.6" fill="#0fc0de"/><circle cx="1500.61" cy="1020.6" r="4.6" fill="#0fc0de"/><circle cx="1511.60" cy="1020.6" r="4.6" fill="#0fc0de"/><circle cx="1522.59" cy="1020.6" r="4.6" fill="#0fc0de"/><circle cx="1533.58" cy="1020.6" r="4.6" fill="#0fc0de"/><circle cx="1544.57" cy="1020.6" r="4.6" fill="#0fc0de"/><circle cx="1555.56" cy="1020.6" r="4.6" fill="#0fc0de"/><circle cx="1566.55" cy="1020.6" r="4.6" fill="#0fc0de"/><circle cx="1577.54" cy="1020.6" r="4.6" fill="#0fc0de"/><circle cx="1588.53" cy="1020.6" r="4.6" fill="#0fc0de"/><circle cx="1599.52" cy="1020.6" r="4.6" fill="#0fc0de"/><circle cx="1610.51" cy="1020.6" r="4.6" fill="#0fc0de"/><circle cx="1621.50" cy="1020.6" r="4.6" fill="#0fc0de"/><circle cx="1632.49" cy="1020.6" r="4.6" fill="#0fc0de"/><circle cx="1643.48" cy="1020.6" r="4.6" fill="#0fc0de"/><circle cx="1654.47" cy="1020.6" r="4.6" fill="#0fc0de"/><circle cx="1665.46" cy="1020.6" r="4.6" fill="#0fc0de"/><circle cx="1676.45" cy="1020.6" r="4.6" fill="#0fc0de"/><circle cx="1687.44" cy="1020.6" r="4.6" fill="#0fc0de"/><circle cx="1698.43" cy="1020.6" r="4.6" fill="#0fc0de"/><circle cx="1709.42" cy="1020.6" r="4.6" fill="#0fc0de"/><circle cx="1720.41" cy="1020.6" r="4.6" fill="#0fc0de"/><path d="M1072.00,1018.00 L1082.99,1004.25 L1093.98,996.75 L1104.97,958.25 L1115.96,995.50 L1126.95,1018.00 L1137.94,1016.75 L1148.93,1008.25 L1159.92,1009.50 L1170.91,1002.25 L1181.90,1013.75 L1192.89,1018.00 L1203.88,1006.50 L1214.87,1011.50 L1225.86,1012.50 L1236.85,1009.00 L1247.84,1012.50 L1258.83,1008.00 L1269.82,1012.00 L1280.81,1013.00 L1291.80,1005.50 L1302.79,1018.00 L1313.78,1009.00 L1324.77,1014.50 L1335.76,1012.50 L1346.75,1005.50 L1357.74,1018.50 L1368.73,1009.00 L1379.72,1014.50 L1390.71,1012.00 L1401.70,1004.00 L1412.69,1018.50 L1423.68,1009.00 L1434.67,1015.75 L1445.66,1011.75 L1456.65,1007.75 L1467.64,1015.75 L1478.63,1005.50 L1489.62,1014.70 L1500.61,1012.90 L1511.60,1007.20 L1522.59,1016.80 L1533.58,1007.70 L1544.57,1014.70 L1555.56,1009.80 L1566.55,1008.20 L1577.54,1019.90 L1588.53,1007.20 L1599.52,1011.10 L1610.51,1011.60 L1621.50,1009.00 L1632.49,1018.90 L1643.48,1009.50 L1654.47,1014.70 L1665.46,1011.60 L1676.45,1012.90 L1687.44,1016.80 L1698.43,999.60 L1709.42,985.60" fill="none" stroke="#f4a534" stroke-width="2"/><circle cx="1072.00" cy="1018.00" r="4.6" fill="#f4a534"/><circle cx="1082.99" cy="1004.25" r="4.6" fill="#f4a534"/><circle cx="1093.98" cy="996.75" r="4.6" fill="#f4a534"/><circle cx="1104.97" cy="958.25" r="4.6" fill="#f4a534"/><circle cx="1115.96" cy="995.50" r="4.6" fill="#f4a534"/><circle cx="1126.95" cy="1018.00" r="4.6" fill="#f4a534"/><circle cx="1137.94" cy="1016.75" r="4.6" fill="#f4a534"/><circle cx="1148.93" cy="1008.25" r="4.6" fill="#f4a534"/><circle cx="1159.92" cy="1009.50" r="4.6" fill="#f4a534"/><circle cx="1170.91" cy="1002.25" r="4.6" fill="#f4a534"/><circle cx="1181.90" cy="1013.75" r="4.6" fill="#f4a534"/><circle cx="1192.89" cy="1018.00" r="4.6" fill="#f4a534"/><circle cx="1203.88" cy="1006.50" r="4.6" fill="#f4a534"/><circle cx="1214.87" cy="1011.50" r="4.6" fill="#f4a534"/><circle cx="1225.86" cy="1012.50" r="4.6" fill="#f4a534"/><circle cx="1236.85" cy="1009.00" r="4.6" fill="#f4a534"/><circle cx="1247.84" cy="1012.50" r="4.6" fill="#f4a534"/><circle cx="1258.83" cy="1008.00" r="4.6" fill="#f4a534"/><circle cx="1269.82" cy="1012.00" r="4.6" fill="#f4a534"/><circle cx="1280.81" cy="1013.00" r="4.6" fill="#f4a534"/><circle cx="1291.80" cy="1005.50" r="4.6" fill="#f4a534"/><circle cx="1302.79" cy="1018.00" r="4.6" fill="#f4a534"/><circle cx="1313.78" cy="1009.00" r="4.6" fill="#f4a534"/><circle cx="1324.77" cy="1014.50" r="4.6" fill="#f4a534"/><circle cx="1335.76" cy="1012.50" r="4.6" fill="#f4a534"/><circle cx="1346.75" cy="1005.50" r="4.6" fill="#f4a534"/><circle cx="1357.74" cy="1018.50" r="4.6" fill="#f4a534"/><circle cx="1368.73" cy="1009.00" r="4.6" fill="#f4a534"/><circle cx="1379.72" cy="1014.50" r="4.6" fill="#f4a534"/><circle cx="1390.71" cy="1012.00" r="4.6" fill="#f4a534"/><circle cx="1401.70" cy="1004.00" r="4.6" fill="#f4a534"/><circle cx="1412.69" cy="1018.50" r="4.6" fill="#f4a534"/><circle cx="1423.68" cy="1009.00" r="4.6" fill="#f4a534"/><circle cx="1434.67" cy="1015.75" r="4.6" fill="#f4a534"/><circle cx="1445.66" cy="1011.75" r="4.6" fill="#f4a534"/><circle cx="1456.65" cy="1007.75" r="4.6" fill="#f4a534"/><circle cx="1467.64" cy="1015.75" r="4.6" fill="#f4a534"/><circle cx="1478.63" cy="1005.50" r="4.6" fill="#f4a534"/><circle cx="1489.62" cy="1014.70" r="4.6" fill="#f4a534"/><circle cx="1500.61" cy="1012.90" r="4.6" fill="#f4a534"/><circle cx="1511.60" cy="1007.20" r="4.6" fill="#f4a534"/><circle cx="1522.59" cy="1016.80" r="4.6" fill="#f4a534"/><circle cx="1533.58" cy="1007.70" r="4.6" fill="#f4a534"/><circle cx="1544.57" cy="1014.70" r="4.6" fill="#f4a534"/><circle cx="1555.56" cy="1009.80" r="4.6" fill="#f4a534"/><circle cx="1566.55" cy="1008.20" r="4.6" fill="#f4a534"/><circle cx="1577.54" cy="1019.90" r="4.6" fill="#f4a534"/><circle cx="1588.53" cy="1007.20" r="4.6" fill="#f4a534"/><circle cx="1599.52" cy="1011.10" r="4.6" fill="#f4a534"/><circle cx="1610.51" cy="1011.60" r="4.6" fill="#f4a534"/><circle cx="1621.50" cy="1009.00" r="4.6" fill="#f4a534"/><circle cx="1632.49" cy="1018.90" r="4.6" fill="#f4a534"/><circle cx="1643.48" cy="1009.50" r="4.6" fill="#f4a534"/><circle cx="1654.47" cy="1014.70" r="4.6" fill="#f4a534"/><circle cx="1665.46" cy="1011.60" r="4.6" fill="#f4a534"/><circle cx="1676.45" cy="1012.90" r="4.6" fill="#f4a534"/><circle cx="1687.44" cy="1016.80" r="4.6" fill="#f4a534"/><circle cx="1698.43" cy="999.60" r="4.6" fill="#f4a534"/><circle cx="1709.42" cy="985.60" r="4.6" fill="#f4a534"/><rect x="1619.1" y="916" width="10" height="10" fill="#0fc0de"/><text x="1634" y="924.6" font-size="10" fill="#333" stroke="#333" stroke-width="0.2" text-anchor="start" >Bytes In</text><rect x="1675.5" y="916" width="10" height="10" fill="#f4a534"/><text x="1689.6" y="924.6" font-size="10" fill="#333" stroke="#333" stroke-width="0.2" text-anchor="start" >Bytes Out</text></svg>
</div></body></html>
